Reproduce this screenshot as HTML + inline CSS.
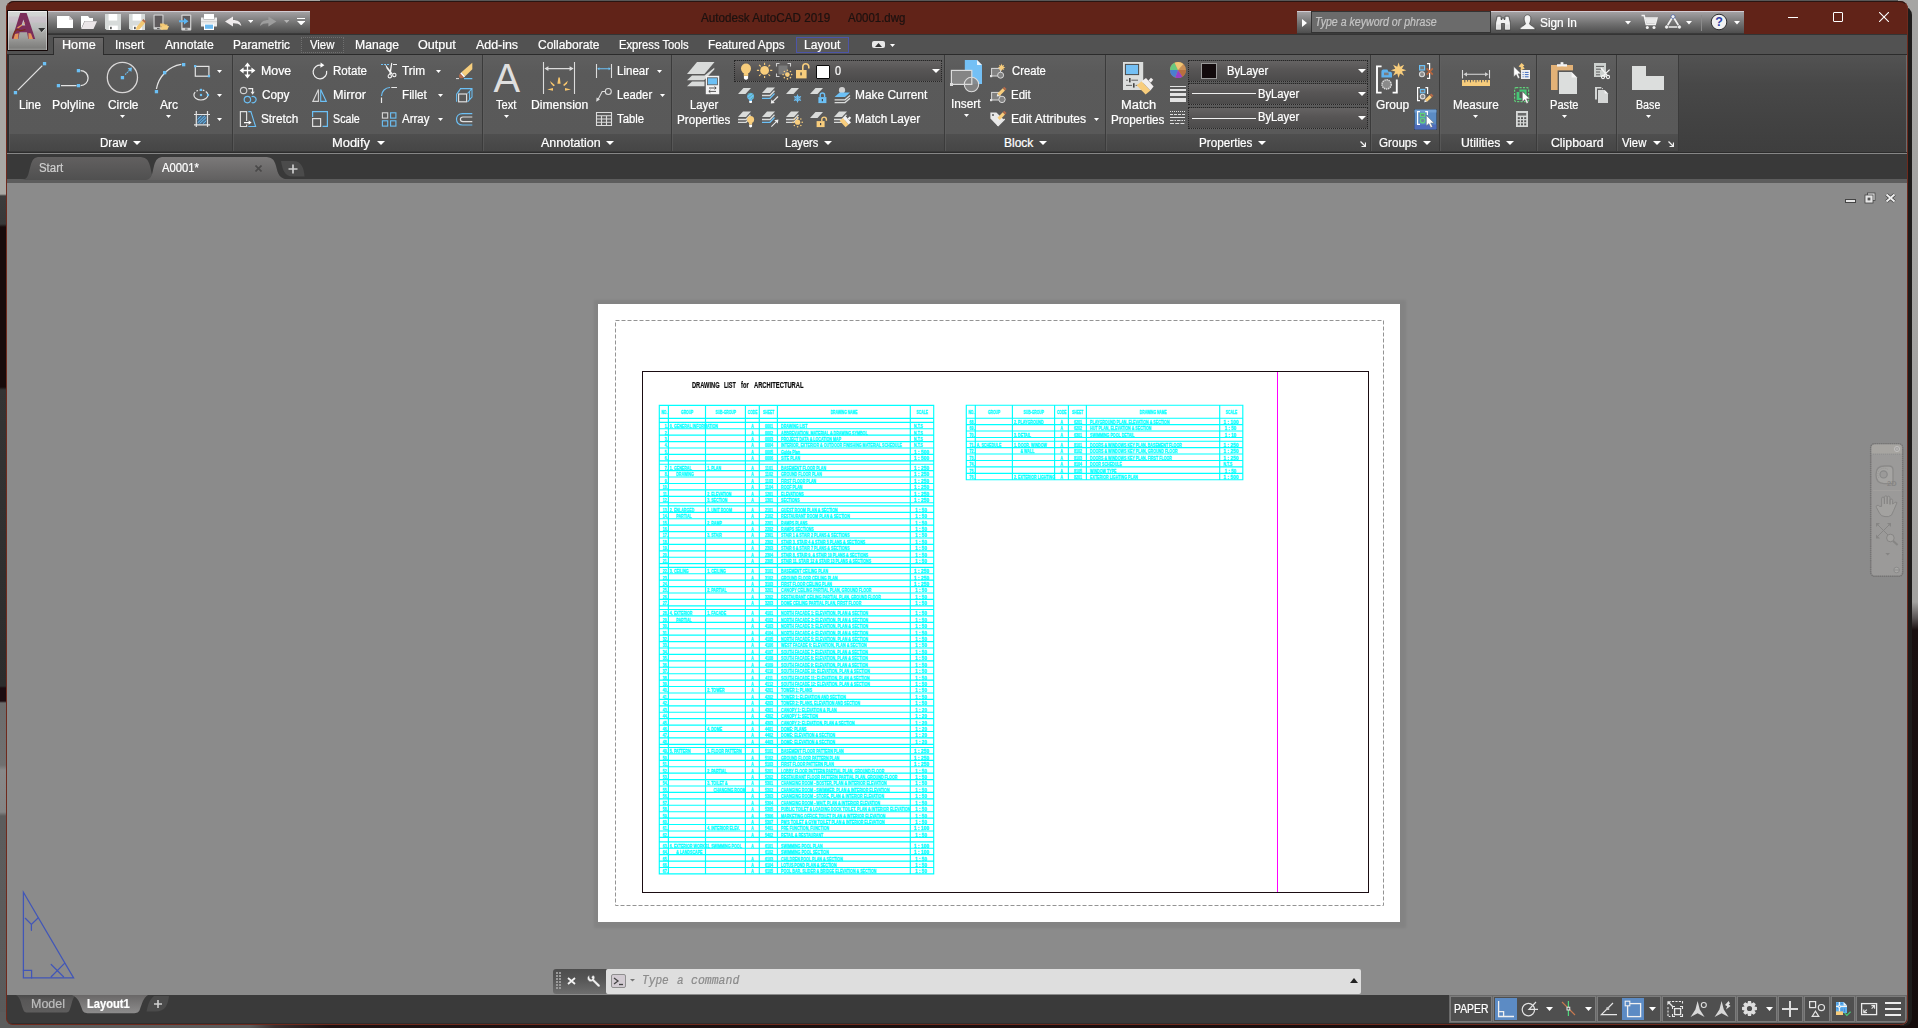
<!DOCTYPE html>
<html><head><meta charset="utf-8"><title>AutoCAD</title><style>
html,body{margin:0;padding:0}
body{width:1918px;height:1028px;overflow:hidden;position:relative;background:#a7a6a2;font-family:"Liberation Sans",sans-serif;font-size:12px}
.r{position:absolute;display:block}
.t{position:absolute;white-space:nowrap;line-height:1;transform-origin:0 0;display:block;-webkit-text-stroke-width:0.22px}
#win{position:absolute;left:0;top:0;width:1918px;height:1028px;clip-path:inset(1px 10px 3px 6px round 8px 8px 7px 7px);background:#8b8b8b}
#winb{position:absolute;left:6px;top:1px;width:1902px;height:1024px;box-sizing:border-box;border:1px solid #6e2a1d;border-top-color:#2a1512;border-radius:8px 8px 7px 7px;pointer-events:none}
</style></head><body>
<div class="r" style="left:0px;top:0px;width:1918px;height:1028px;background:#a7a6a2;"></div>
<div class="r" style="left:320px;top:0px;width:1578px;height:1px;background:#585858;"></div>
<div class="r" style="left:320px;top:1px;width:1584px;height:8px;background:#1e1212;"></div>
<div class="r" style="left:0px;top:0px;width:16px;height:1028px;background:linear-gradient(to bottom,#a9a8a4 0,#a9a8a4 194px,#3c3c3c 196px,#383838 224px,#170b0b 227px,#170b0b 387px,#343434 390px,#2c2c2c 686px,#1c0c10 688px,#1c0c10 701px,#6c6c6c 703px,#707070 765px,#888 770px,#848484 812px,#5c5c5c 816px,#5a5a5a 1028px);"></div>
<div class="r" style="left:0px;top:1012px;width:1918px;height:16px;background:linear-gradient(to right,#5c5c5c 0,#5a5a5a 250px,#3a3030 275px,#1d1212 330px,#160c0c 1918px);"></div>
<div class="r" style="left:1898px;top:0px;width:20px;height:1028px;background:linear-gradient(to bottom,#a6a5a3 0,#a3a2a0 602px,#5a5555 618px,#1a1010 630px,#150c0c 1028px);"></div>
<div class="r" style="left:1900px;top:6px;width:12px;height:1020px;background:#1e1c1b;border-radius:0 9px 8px 0;"></div>
<div id="win">
<div class="r" style="left:0px;top:0px;width:1918px;height:34px;background:#612318;"></div>
<div class="r" style="left:0px;top:34px;width:1918px;height:20px;background:#525252;"></div>
<div class="r" style="left:0px;top:34px;width:1918px;height:1px;background:#343434;"></div>
<div class="r" style="left:48px;top:11px;width:262px;height:23px;background:linear-gradient(to bottom,#d2ccd3 0,#d2ccd3 1px,#a3a1a3 1px,#8d8c8d 6px,#6f6f6f 13px,#595959 19px,#4e4e4e 22px,#3a3a3a 22px,#3a3a3a 23px);"></div>
<div class="r" style="left:1297px;top:11px;width:447px;height:23px;background:linear-gradient(to bottom,#d2ccd3 0,#d2ccd3 1px,#a3a1a3 1px,#8d8c8d 6px,#6f6f6f 13px,#595959 19px,#4e4e4e 22px,#3a3a3a 22px,#3a3a3a 23px);"></div>
<div class="r" style="left:1311px;top:11px;width:180px;height:22px;background:#6b6b6b;border:1px solid #333;box-sizing:border-box;"></div>
<span class="t" style="left:1315px;top:16.24px;font-size:12px;color:#c4c4c4;transform:scaleX(0.882);font-style:italic;">Type a keyword or phrase</span>
<svg class="r" style="left:1302px;top:19px;" width="5" height="8" viewBox="0 0 5 8"><path d="M0 0L5 4L0 8Z" fill="#fff"/></svg>
<span class="t" style="left:1540px;top:17.14px;font-size:12px;color:#fff;transform:scaleX(0.986);">Sign In</span>
<svg class="r" style="left:1624.5px;top:21px;" width="6" height="3.5" viewBox="0 0 6 3.5"><path d="M0 0H6L3.0 3.5Z" fill="#fff"/></svg>
<svg class="r" style="left:1685.5px;top:21px;" width="6" height="3.5" viewBox="0 0 6 3.5"><path d="M0 0H6L3.0 3.5Z" fill="#fff"/></svg>
<svg class="r" style="left:1733.5px;top:21px;" width="6" height="3.5" viewBox="0 0 6 3.5"><path d="M0 0H6L3.0 3.5Z" fill="#fff"/></svg>
<div class="r" style="left:1701px;top:15px;width:1px;height:16px;background:#8a8a8a;"></div>
<span class="t" style="left:701px;top:11.84px;font-size:12px;color:#1c1210;transform:scaleX(0.973);">Autodesk AutoCAD 2019</span>
<span class="t" style="left:848px;top:11.84px;font-size:12px;color:#1c1210;transform:scaleX(0.955);">A0001.dwg</span>
<div class="r" style="left:1788px;top:17px;width:10px;height:1px;background:#fff;"></div>
<div class="r" style="left:1833px;top:12px;width:10px;height:10px;background:transparent;border:1px solid #fff;box-sizing:border-box;border-radius:1px;"></div>
<svg class="r" style="left:1879px;top:12px;" width="10" height="10" viewBox="0 0 10 10"><path d="M0 0L10 10M10 0L0 10" stroke="#fff" stroke-width="1.1" fill="none"/></svg>
<div class="r" style="left:7px;top:10px;width:41px;height:41px;background:#120606;border-radius:1px;"></div>
<div class="r" style="left:8px;top:11px;width:39px;height:39px;background:linear-gradient(to bottom,#f2f0f0 0,#f2f0f0 1px,#d3d6d5 1px,#d0d2d1 5px,#cbc4cb 6px,#c8c0c8 11px,#c0c0c0 12px,#b6b9b8 18px,#a9a9a7 21px,#a0a09e 26px,#8f8f8d 31px,#7f7f7d 37px,#8d8d8b 38px,#8d8d8b 39px);"></div>
<div class="r" style="left:8px;top:11px;width:1px;height:39px;background:rgba(230,230,230,.55);"></div>
<div class="r" style="left:46px;top:11px;width:1px;height:39px;background:rgba(225,225,225,.5);"></div>
<svg class="r" style="left:10px;top:12px;" width="28" height="29" viewBox="0 0 28 29"><path d="M2 27L10.2 1H16.6L25.2 27H18.3L17 20.2H9.6L8.3 27Z M11.4 13.6H15.3L13.4 7.4Z" fill="#7b2d5a" fill-rule="evenodd"/><path d="M3.4 27L5 22L8.6 21.2L8 27ZM18.4 21L21 21.6L23 27H18.6Z" fill="#e2935a"/><path d="M7 15.4L11.6 12.4L12.4 13.6L8 16.4ZM13.6 10.4L14.6 10.2L14.8 12L13.8 12.2Z" fill="#e2935a"/><path d="M2.6 26Q4 19 7 17.6Q9 17.6 10 18.6Q13 18.4 15.4 17.4" stroke="#7a2b12" stroke-width="1.1" fill="none"/></svg>
<svg class="r" style="left:38px;top:28px;" width="8" height="5" viewBox="0 0 8 5"><path d="M0.2 0H7.4L3.8 4.2Z" fill="#333"/><path d="M7.4 0.4L3.8 4.6" stroke="#e8e8e8" stroke-width=".6"/></svg>
<div class="r" style="left:53px;top:37px;width:51px;height:18px;background:linear-gradient(to bottom,#6a6868,#626161 50%,#5f5f5f);border:1px solid #2e2e2e;border-bottom:none;box-sizing:border-box;"></div>
<div class="r" style="left:301px;top:37px;width:43px;height:16px;background:#4f4f4f;border:1px dotted #707070;box-sizing:border-box;"></div>
<div class="r" style="left:796px;top:37px;width:53px;height:16px;background:#595959;border:1px solid #4d55a8;box-sizing:border-box;"></div>
<span class="t" style="left:62px;top:38.54px;font-size:12px;color:#fff;transform:scaleX(1.052);">Home</span>
<span class="t" style="left:115px;top:38.54px;font-size:12px;color:#fff;transform:scaleX(0.978);">Insert</span>
<span class="t" style="left:165px;top:38.54px;font-size:12px;color:#fff;transform:scaleX(1.015);">Annotate</span>
<span class="t" style="left:233px;top:38.54px;font-size:12px;color:#fff;transform:scaleX(0.982);">Parametric</span>
<span class="t" style="left:310px;top:38.54px;font-size:12px;color:#fff;transform:scaleX(0.944);">View</span>
<span class="t" style="left:355px;top:38.54px;font-size:12px;color:#fff;transform:scaleX(1.013);">Manage</span>
<span class="t" style="left:418px;top:38.54px;font-size:12px;color:#fff;transform:scaleX(1.050);">Output</span>
<span class="t" style="left:476px;top:38.54px;font-size:12px;color:#fff;transform:scaleX(1.034);">Add-ins</span>
<span class="t" style="left:538px;top:38.54px;font-size:12px;color:#fff;transform:scaleX(1.001);">Collaborate</span>
<span class="t" style="left:619px;top:38.54px;font-size:12px;color:#fff;transform:scaleX(0.936);">Express Tools</span>
<span class="t" style="left:708px;top:38.54px;font-size:12px;color:#fff;transform:scaleX(0.983);">Featured Apps</span>
<span class="t" style="left:804px;top:38.54px;font-size:12px;color:#fff;transform:scaleX(1.007);">Layout</span>
<div class="r" style="left:872px;top:41px;width:13px;height:7px;background:#e8e8e8;border-radius:2px;"></div>
<svg class="r" style="left:875px;top:42.5px;" width="7" height="4" viewBox="0 0 7 4"><path d="M0 4H7L3.5 0Z" fill="#333"/></svg>
<svg class="r" style="left:890.0px;top:43.5px;" width="5" height="3" viewBox="0 0 5 3"><path d="M0 0H5L2.5 3Z" fill="#fff"/></svg>
<div class="r" style="left:0px;top:54px;width:1918px;height:100px;background:#3a3a3a;"></div>
<div class="r" style="left:7px;top:54px;width:47px;height:1px;background:#2b2b2b;"></div>
<div class="r" style="left:54px;top:54px;width:49px;height:1px;background:#5f5f5f;"></div>
<div class="r" style="left:103px;top:54px;width:1804px;height:1px;background:#2b2b2b;"></div>
<div class="r" style="left:7px;top:55px;width:2px;height:97px;background:#2e2e2e;"></div>
<div class="r" style="left:8px;top:55px;width:1px;height:97px;background:#2b2b2b;"></div>
<div class="r" style="left:1679px;top:55px;width:228px;height:97px;background:#444;"></div>
<div class="r" style="left:1679px;top:55px;width:228px;height:97px;background:linear-gradient(to bottom,#525252 0,#484848 30%,#424242 70%,#3e3e3e 100%);"></div>
<div class="r" style="left:1906px;top:55px;width:1px;height:98px;background:#6c6c6c;"></div>
<div class="r" style="left:9px;top:55px;width:223px;height:79px;background:linear-gradient(to bottom,#5f5f5f 0,#5a5a5a 18px,#595959 100%);"></div>
<div class="r" style="left:9px;top:134px;width:223px;height:17px;background:linear-gradient(to bottom,#4f4f4f,#494949 60%,#464646);"></div>
<div class="r" style="left:9px;top:151px;width:223px;height:1px;background:#3a3a3a;"></div>
<div class="r" style="left:232px;top:55px;width:1px;height:97px;background:#3b3b3b;"></div>
<div class="r" style="left:9px;top:55px;width:1px;height:96px;background:#626262;opacity:.55;"></div>
<div class="r" style="left:233px;top:55px;width:249px;height:79px;background:linear-gradient(to bottom,#5f5f5f 0,#5a5a5a 18px,#595959 100%);"></div>
<div class="r" style="left:233px;top:134px;width:249px;height:17px;background:linear-gradient(to bottom,#4f4f4f,#494949 60%,#464646);"></div>
<div class="r" style="left:233px;top:151px;width:249px;height:1px;background:#3a3a3a;"></div>
<div class="r" style="left:482px;top:55px;width:1px;height:97px;background:#3b3b3b;"></div>
<div class="r" style="left:233px;top:55px;width:1px;height:96px;background:#626262;opacity:.55;"></div>
<div class="r" style="left:483px;top:55px;width:188px;height:79px;background:linear-gradient(to bottom,#5f5f5f 0,#5a5a5a 18px,#595959 100%);"></div>
<div class="r" style="left:483px;top:134px;width:188px;height:17px;background:linear-gradient(to bottom,#4f4f4f,#494949 60%,#464646);"></div>
<div class="r" style="left:483px;top:151px;width:188px;height:1px;background:#3a3a3a;"></div>
<div class="r" style="left:671px;top:55px;width:1px;height:97px;background:#3b3b3b;"></div>
<div class="r" style="left:483px;top:55px;width:1px;height:96px;background:#626262;opacity:.55;"></div>
<div class="r" style="left:672px;top:55px;width:272px;height:79px;background:linear-gradient(to bottom,#5f5f5f 0,#5a5a5a 18px,#595959 100%);"></div>
<div class="r" style="left:672px;top:134px;width:272px;height:17px;background:linear-gradient(to bottom,#4f4f4f,#494949 60%,#464646);"></div>
<div class="r" style="left:672px;top:151px;width:272px;height:1px;background:#3a3a3a;"></div>
<div class="r" style="left:944px;top:55px;width:1px;height:97px;background:#3b3b3b;"></div>
<div class="r" style="left:672px;top:55px;width:1px;height:96px;background:#626262;opacity:.55;"></div>
<div class="r" style="left:945px;top:55px;width:160px;height:79px;background:linear-gradient(to bottom,#5f5f5f 0,#5a5a5a 18px,#595959 100%);"></div>
<div class="r" style="left:945px;top:134px;width:160px;height:17px;background:linear-gradient(to bottom,#4f4f4f,#494949 60%,#464646);"></div>
<div class="r" style="left:945px;top:151px;width:160px;height:1px;background:#3a3a3a;"></div>
<div class="r" style="left:1105px;top:55px;width:1px;height:97px;background:#3b3b3b;"></div>
<div class="r" style="left:945px;top:55px;width:1px;height:96px;background:#626262;opacity:.55;"></div>
<div class="r" style="left:1106px;top:55px;width:264px;height:79px;background:linear-gradient(to bottom,#5f5f5f 0,#5a5a5a 18px,#595959 100%);"></div>
<div class="r" style="left:1106px;top:134px;width:264px;height:17px;background:linear-gradient(to bottom,#4f4f4f,#494949 60%,#464646);"></div>
<div class="r" style="left:1106px;top:151px;width:264px;height:1px;background:#3a3a3a;"></div>
<div class="r" style="left:1370px;top:55px;width:1px;height:97px;background:#3b3b3b;"></div>
<div class="r" style="left:1106px;top:55px;width:1px;height:96px;background:#626262;opacity:.55;"></div>
<div class="r" style="left:1371px;top:55px;width:68px;height:79px;background:linear-gradient(to bottom,#5f5f5f 0,#5a5a5a 18px,#595959 100%);"></div>
<div class="r" style="left:1371px;top:134px;width:68px;height:17px;background:linear-gradient(to bottom,#4f4f4f,#494949 60%,#464646);"></div>
<div class="r" style="left:1371px;top:151px;width:68px;height:1px;background:#3a3a3a;"></div>
<div class="r" style="left:1439px;top:55px;width:1px;height:97px;background:#3b3b3b;"></div>
<div class="r" style="left:1371px;top:55px;width:1px;height:96px;background:#626262;opacity:.55;"></div>
<div class="r" style="left:1440px;top:55px;width:96px;height:79px;background:linear-gradient(to bottom,#5f5f5f 0,#5a5a5a 18px,#595959 100%);"></div>
<div class="r" style="left:1440px;top:134px;width:96px;height:17px;background:linear-gradient(to bottom,#4f4f4f,#494949 60%,#464646);"></div>
<div class="r" style="left:1440px;top:151px;width:96px;height:1px;background:#3a3a3a;"></div>
<div class="r" style="left:1536px;top:55px;width:1px;height:97px;background:#3b3b3b;"></div>
<div class="r" style="left:1440px;top:55px;width:1px;height:96px;background:#626262;opacity:.55;"></div>
<div class="r" style="left:1537px;top:55px;width:79px;height:79px;background:linear-gradient(to bottom,#5f5f5f 0,#5a5a5a 18px,#595959 100%);"></div>
<div class="r" style="left:1537px;top:134px;width:79px;height:17px;background:linear-gradient(to bottom,#4f4f4f,#494949 60%,#464646);"></div>
<div class="r" style="left:1537px;top:151px;width:79px;height:1px;background:#3a3a3a;"></div>
<div class="r" style="left:1616px;top:55px;width:1px;height:97px;background:#3b3b3b;"></div>
<div class="r" style="left:1537px;top:55px;width:1px;height:96px;background:#626262;opacity:.55;"></div>
<div class="r" style="left:1617px;top:55px;width:61px;height:79px;background:linear-gradient(to bottom,#5f5f5f 0,#5a5a5a 18px,#595959 100%);"></div>
<div class="r" style="left:1617px;top:134px;width:61px;height:17px;background:linear-gradient(to bottom,#4f4f4f,#494949 60%,#464646);"></div>
<div class="r" style="left:1617px;top:151px;width:61px;height:1px;background:#3a3a3a;"></div>
<div class="r" style="left:1678px;top:55px;width:1px;height:97px;background:#3b3b3b;"></div>
<div class="r" style="left:1617px;top:55px;width:1px;height:96px;background:#626262;opacity:.55;"></div>
<div class="r" style="left:7px;top:152px;width:1900px;height:1px;background:#2c2c2c;"></div>
<div class="r" style="left:7px;top:153px;width:1900px;height:1px;background:#868686;"></div>
<span class="t" style="left:19px;top:99.34px;font-size:12px;color:#fff;transform:scaleX(0.973);">Line</span>
<span class="t" style="left:52px;top:99.34px;font-size:12px;color:#fff;transform:scaleX(1.017);">Polyline</span>
<span class="t" style="left:108px;top:99.34px;font-size:12px;color:#fff;transform:scaleX(0.992);">Circle</span>
<span class="t" style="left:160px;top:99.34px;font-size:12px;color:#fff;transform:scaleX(1.009);">Arc</span>
<svg class="r" style="left:120.0px;top:114.5px;" width="5" height="3" viewBox="0 0 5 3"><path d="M0 0H5L2.5 3Z" fill="#fff"/></svg>
<svg class="r" style="left:166.0px;top:114.5px;" width="5" height="3" viewBox="0 0 5 3"><path d="M0 0H5L2.5 3Z" fill="#fff"/></svg>
<svg class="r" style="left:217.0px;top:69.5px;" width="5" height="3" viewBox="0 0 5 3"><path d="M0 0H5L2.5 3Z" fill="#fff"/></svg>
<svg class="r" style="left:217.0px;top:93.5px;" width="5" height="3" viewBox="0 0 5 3"><path d="M0 0H5L2.5 3Z" fill="#fff"/></svg>
<svg class="r" style="left:217.0px;top:117.5px;" width="5" height="3" viewBox="0 0 5 3"><path d="M0 0H5L2.5 3Z" fill="#fff"/></svg>
<span class="t" style="left:100px;top:137.14px;font-size:12px;color:#fff;transform:scaleX(0.966);">Draw</span>
<svg class="r" style="left:133.0px;top:141.3px;" width="8" height="4" viewBox="0 0 8 4"><path d="M0 0H8L4.0 4Z" fill="#fff"/></svg>
<span class="t" style="left:261px;top:64.84px;font-size:12px;color:#fff;transform:scaleX(1.030);">Move</span>
<span class="t" style="left:262px;top:88.84px;font-size:12px;color:#fff;transform:scaleX(0.982);">Copy</span>
<span class="t" style="left:261px;top:112.84px;font-size:12px;color:#fff;transform:scaleX(0.981);">Stretch</span>
<span class="t" style="left:333px;top:64.84px;font-size:12px;color:#fff;transform:scaleX(0.962);">Rotate</span>
<span class="t" style="left:333px;top:88.84px;font-size:12px;color:#fff;transform:scaleX(1.056);">Mirror</span>
<span class="t" style="left:333px;top:112.84px;font-size:12px;color:#fff;transform:scaleX(0.892);">Scale</span>
<span class="t" style="left:402px;top:64.84px;font-size:12px;color:#fff;transform:scaleX(0.984);">Trim</span>
<span class="t" style="left:402px;top:88.84px;font-size:12px;color:#fff;transform:scaleX(0.978);">Fillet</span>
<span class="t" style="left:402px;top:112.84px;font-size:12px;color:#fff;transform:scaleX(0.956);">Array</span>
<svg class="r" style="left:436.0px;top:69.5px;" width="5" height="3" viewBox="0 0 5 3"><path d="M0 0H5L2.5 3Z" fill="#fff"/></svg>
<svg class="r" style="left:438.0px;top:93.5px;" width="5" height="3" viewBox="0 0 5 3"><path d="M0 0H5L2.5 3Z" fill="#fff"/></svg>
<svg class="r" style="left:438.0px;top:117.5px;" width="5" height="3" viewBox="0 0 5 3"><path d="M0 0H5L2.5 3Z" fill="#fff"/></svg>
<span class="t" style="left:332px;top:137.14px;font-size:12px;color:#fff;transform:scaleX(1.075);">Modify</span>
<svg class="r" style="left:376.5px;top:141.3px;" width="8" height="4" viewBox="0 0 8 4"><path d="M0 0H8L4.0 4Z" fill="#fff"/></svg>
<span class="t" style="left:496px;top:99.34px;font-size:12px;color:#fff;transform:scaleX(0.927);">Text</span>
<svg class="r" style="left:504.0px;top:114.5px;" width="5" height="3" viewBox="0 0 5 3"><path d="M0 0H5L2.5 3Z" fill="#fff"/></svg>
<span class="t" style="left:531px;top:99.34px;font-size:12px;color:#fff;transform:scaleX(1.012);">Dimension</span>
<span class="t" style="left:617px;top:64.84px;font-size:12px;color:#fff;transform:scaleX(0.963);">Linear</span>
<span class="t" style="left:617px;top:88.84px;font-size:12px;color:#fff;transform:scaleX(0.941);">Leader</span>
<span class="t" style="left:617px;top:112.84px;font-size:12px;color:#fff;transform:scaleX(0.942);">Table</span>
<svg class="r" style="left:657.0px;top:69.5px;" width="5" height="3" viewBox="0 0 5 3"><path d="M0 0H5L2.5 3Z" fill="#fff"/></svg>
<svg class="r" style="left:660.0px;top:93.5px;" width="5" height="3" viewBox="0 0 5 3"><path d="M0 0H5L2.5 3Z" fill="#fff"/></svg>
<span class="t" style="left:541px;top:137.14px;font-size:12px;color:#fff;transform:scaleX(1.040);">Annotation</span>
<svg class="r" style="left:606.0px;top:141.3px;" width="8" height="4" viewBox="0 0 8 4"><path d="M0 0H8L4.0 4Z" fill="#fff"/></svg>
<span class="t" style="left:690px;top:99.34px;font-size:12px;color:#fff;transform:scaleX(0.939);">Layer</span>
<span class="t" style="left:677px;top:113.84px;font-size:12px;color:#fff;transform:scaleX(0.976);">Properties</span>
<div class="r" style="left:734px;top:60px;width:208px;height:22px;background:linear-gradient(to bottom,#656363 0,#575555 45%,#4c4b4b 100%);border:1px dotted #262626;box-sizing:border-box;"></div>
<div class="r" style="left:816px;top:65px;width:14px;height:14px;background:#fff;border:1px solid #0a0a0a;box-sizing:border-box;border-radius:1px;"></div>
<span class="t" style="left:835px;top:64.84px;font-size:12px;color:#fff;transform:scaleX(0.902);">0</span>
<svg class="r" style="left:932.0px;top:69px;" width="8" height="4" viewBox="0 0 8 4"><path d="M0 0H8L4.0 4Z" fill="#fff"/></svg>
<span class="t" style="left:855px;top:88.84px;font-size:12px;color:#fff;transform:scaleX(0.994);">Make Current</span>
<span class="t" style="left:855px;top:112.84px;font-size:12px;color:#fff;transform:scaleX(0.987);">Match Layer</span>
<span class="t" style="left:785px;top:137.14px;font-size:12px;color:#fff;transform:scaleX(0.927);">Layers</span>
<svg class="r" style="left:824.0px;top:141.3px;" width="8" height="4" viewBox="0 0 8 4"><path d="M0 0H8L4.0 4Z" fill="#fff"/></svg>
<span class="t" style="left:951px;top:98.44px;font-size:12px;color:#fff;transform:scaleX(0.985);">Insert</span>
<svg class="r" style="left:964.0px;top:114px;" width="5" height="3" viewBox="0 0 5 3"><path d="M0 0H5L2.5 3Z" fill="#fff"/></svg>
<span class="t" style="left:1012px;top:64.84px;font-size:12px;color:#fff;transform:scaleX(0.939);">Create</span>
<span class="t" style="left:1011px;top:88.84px;font-size:12px;color:#fff;transform:scaleX(0.958);">Edit</span>
<span class="t" style="left:1011px;top:112.84px;font-size:12px;color:#fff;transform:scaleX(1.015);">Edit Attributes</span>
<svg class="r" style="left:1094.0px;top:117.5px;" width="5" height="3" viewBox="0 0 5 3"><path d="M0 0H5L2.5 3Z" fill="#fff"/></svg>
<span class="t" style="left:1004px;top:137.14px;font-size:12px;color:#fff;transform:scaleX(1.000);">Block</span>
<svg class="r" style="left:1039.0px;top:141.3px;" width="8" height="4" viewBox="0 0 8 4"><path d="M0 0H8L4.0 4Z" fill="#fff"/></svg>
<span class="t" style="left:1121px;top:99.34px;font-size:12px;color:#fff;transform:scaleX(1.076);">Match</span>
<span class="t" style="left:1111px;top:113.84px;font-size:12px;color:#fff;transform:scaleX(0.976);">Properties</span>
<div class="r" style="left:1188px;top:60px;width:180px;height:22px;background:linear-gradient(to bottom,#656363 0,#575555 45%,#4c4b4b 100%);border:1px dotted #262626;box-sizing:border-box;"></div>
<div class="r" style="left:1188px;top:83px;width:180px;height:22px;background:linear-gradient(to bottom,#656363 0,#575555 45%,#4c4b4b 100%);border:1px dotted #262626;box-sizing:border-box;"></div>
<div class="r" style="left:1188px;top:107px;width:180px;height:22px;background:linear-gradient(to bottom,#656363 0,#575555 45%,#4c4b4b 100%);border:1px dotted #262626;box-sizing:border-box;"></div>
<div class="r" style="left:1201px;top:63px;width:16px;height:16px;background:#120a0c;border:1px solid #9a9a9a;box-sizing:border-box;"></div>
<span class="t" style="left:1227px;top:64.84px;font-size:12px;color:#fff;transform:scaleX(0.936);">ByLayer</span>
<span class="t" style="left:1258px;top:87.84px;font-size:12px;color:#fff;transform:scaleX(0.936);">ByLayer</span>
<span class="t" style="left:1258px;top:111.44px;font-size:12px;color:#fff;transform:scaleX(0.936);">ByLayer</span>
<div class="r" style="left:1192px;top:93px;width:64px;height:1px;background:#f0f0f0;"></div>
<div class="r" style="left:1192px;top:117.5px;width:64px;height:1px;background:#f0f0f0;"></div>
<svg class="r" style="left:1358.0px;top:69px;" width="8" height="4" viewBox="0 0 8 4"><path d="M0 0H8L4.0 4Z" fill="#fff"/></svg>
<svg class="r" style="left:1358.0px;top:92px;" width="8" height="4" viewBox="0 0 8 4"><path d="M0 0H8L4.0 4Z" fill="#fff"/></svg>
<svg class="r" style="left:1358.0px;top:116px;" width="8" height="4" viewBox="0 0 8 4"><path d="M0 0H8L4.0 4Z" fill="#fff"/></svg>
<span class="t" style="left:1199px;top:137.14px;font-size:12px;color:#fff;transform:scaleX(0.976);">Properties</span>
<svg class="r" style="left:1258.0px;top:141.3px;" width="8" height="4" viewBox="0 0 8 4"><path d="M0 0H8L4.0 4Z" fill="#fff"/></svg>
<svg class="r" style="left:1360px;top:141px;" width="6" height="6" viewBox="0 0 6 6"><path d="M0.5 0.5L5 5M5.5 1.5V5.5H1.5" stroke="#f0f0f0" stroke-width="1.25" fill="none"/></svg>
<span class="t" style="left:1376px;top:99.34px;font-size:12px;color:#fff;transform:scaleX(0.994);">Group</span>
<span class="t" style="left:1379px;top:137.14px;font-size:12px;color:#fff;transform:scaleX(0.969);">Groups</span>
<svg class="r" style="left:1423.0px;top:141.3px;" width="8" height="4" viewBox="0 0 8 4"><path d="M0 0H8L4.0 4Z" fill="#fff"/></svg>
<div class="r" style="left:1414px;top:109px;width:23px;height:21px;background:#5b84c0;border:1px solid #2a2a2a;box-sizing:border-box;"></div>
<span class="t" style="left:1453px;top:99.34px;font-size:12px;color:#fff;transform:scaleX(0.979);">Measure</span>
<svg class="r" style="left:1473.0px;top:114.5px;" width="5" height="3" viewBox="0 0 5 3"><path d="M0 0H5L2.5 3Z" fill="#fff"/></svg>
<span class="t" style="left:1461px;top:137.14px;font-size:12px;color:#fff;transform:scaleX(1.018);">Utilities</span>
<svg class="r" style="left:1506.0px;top:141.3px;" width="8" height="4" viewBox="0 0 8 4"><path d="M0 0H8L4.0 4Z" fill="#fff"/></svg>
<span class="t" style="left:1550px;top:99.34px;font-size:12px;color:#fff;transform:scaleX(0.925);">Paste</span>
<svg class="r" style="left:1562.0px;top:114.5px;" width="5" height="3" viewBox="0 0 5 3"><path d="M0 0H5L2.5 3Z" fill="#fff"/></svg>
<span class="t" style="left:1551px;top:137.14px;font-size:12px;color:#fff;transform:scaleX(1.024);">Clipboard</span>
<span class="t" style="left:1636px;top:99.34px;font-size:12px;color:#fff;transform:scaleX(0.890);">Base</span>
<svg class="r" style="left:1646.0px;top:114.5px;" width="5" height="3" viewBox="0 0 5 3"><path d="M0 0H5L2.5 3Z" fill="#fff"/></svg>
<span class="t" style="left:1622px;top:137.14px;font-size:12px;color:#fff;transform:scaleX(0.944);">View</span>
<svg class="r" style="left:1653.0px;top:141.3px;" width="8" height="4" viewBox="0 0 8 4"><path d="M0 0H8L4.0 4Z" fill="#fff"/></svg>
<svg class="r" style="left:1668px;top:141px;" width="6" height="6" viewBox="0 0 6 6"><path d="M0.5 0.5L5 5M5.5 1.5V5.5H1.5" stroke="#f0f0f0" stroke-width="1.25" fill="none"/></svg>
<div class="r" style="left:0px;top:154px;width:1918px;height:25px;background:#393939;"></div>
<div class="r" style="left:0px;top:179px;width:1918px;height:4px;background:#5d5d5d;"></div>
<svg class="r" style="left:20px;top:157px;" width="136" height="23" viewBox="0 0 136 23"><defs><linearGradient id="gS" x1="0" y1="0" x2="0" y2="1"><stop offset="0" stop-color="#626060"/><stop offset="1" stop-color="#505050"/></linearGradient></defs><path d="M0 23C9 23 8 17 10.5 9C12.5 2 14 0 20 0H118C126 0 128 2 130 9C132 17 132 22 136 23Z" fill="url(#gS)"/></svg>
<svg class="r" style="left:146px;top:157px;" width="144" height="23" viewBox="0 0 144 23"><defs><linearGradient id="gA" x1="0" y1="0" x2="0" y2="1"><stop offset="0" stop-color="#7b7979"/><stop offset="1" stop-color="#616060"/></linearGradient></defs><path d="M0 23C6 22 6 17 8 9C10 2 12 0 18 0H118C126 0 128 2 130 9C132 17 133 22 144 23Z" fill="url(#gA)"/></svg>
<svg class="r" style="left:281px;top:161px;" width="24" height="16" viewBox="0 0 24 16"><path d="M0 0H12C21 0 23 8 23.5 15.5H12C3 15.5 1.5 8 0 0Z" fill="#4b4b4b"/><path d="M7.5 8H16.5M12 3.5V12.5" stroke="#cdcdcd" stroke-width="1.7" fill="none"/></svg>
<span class="t" style="left:39px;top:162.44px;font-size:12px;color:#cfcfcf;transform:scaleX(0.952);">Start</span>
<span class="t" style="left:162px;top:162.44px;font-size:12px;color:#fff;transform:scaleX(0.936);">A0001*</span>
<svg class="r" style="left:255px;top:164.5px;" width="7" height="7" viewBox="0 0 7 7"><path d="M0.5 0.5L6.5 6.5M6.5 0.5L0.5 6.5" stroke="#4a4949" stroke-width="1.6" fill="none"/></svg>
<div class="r" style="left:0px;top:183px;width:1918px;height:812px;background:#8b8b8b;"></div>
<div class="r" style="left:1845px;top:199px;width:11px;height:4px;background:#e6e6e6;border:1px solid #444;box-sizing:border-box;"></div>
<svg class="r" style="left:1864px;top:192px;" width="12" height="12" viewBox="0 0 12 12"><rect x="3.5" y="1" width="7.5" height="7.5" fill="#e0e0e0" stroke="#444" stroke-width=".8"/><rect x="1" y="3" width="8" height="8" fill="#e6e6e6" stroke="#444" stroke-width=".8"/><rect x="3.6" y="5.6" width="2.8" height="2.8" fill="#555"/></svg>
<svg class="r" style="left:1885px;top:193px;" width="11" height="10" viewBox="0 0 11 10"><path d="M1.5 1.5L9.5 8.5M9.5 1.5L1.5 8.5" stroke="#444" stroke-width="3.6" fill="none"/><path d="M1.5 1.5L9.5 8.5M9.5 1.5L1.5 8.5" stroke="#eee" stroke-width="2" fill="none"/></svg>
<div class="r" style="left:594px;top:300px;width:812px;height:628px;background:#838383;filter:blur(1.2px);opacity:.9;"></div>
<div class="r" style="left:598px;top:304px;width:802px;height:618px;background:#fff;"></div>
<svg class="r" style="left:610px;top:315px;" width="780" height="596" viewBox="0 0 780 596"><rect x="5.5" y="5.5" width="768" height="585" fill="none" stroke="#949494" stroke-width="1" stroke-dasharray="4 2"/></svg>
<div class="r" style="left:642px;top:371px;width:727px;height:522px;background:transparent;border:1px solid #1a0c12;box-sizing:border-box;"></div>
<div class="r" style="left:1277px;top:372px;width:1px;height:520px;background:#ff00ff;"></div>
<span class="t" style="left:692px;top:381.11px;font-size:9.2px;color:#0c0c0c;transform:scaleX(0.621);font-weight:700;">DRAWING</span>
<span class="t" style="left:724px;top:381.11px;font-size:9.2px;color:#0c0c0c;transform:scaleX(0.596);font-weight:700;">LIST</span>
<span class="t" style="left:741px;top:381.11px;font-size:9.2px;color:#0c0c0c;transform:scaleX(0.620);font-weight:700;">for</span>
<span class="t" style="left:754px;top:381.11px;font-size:9.2px;color:#0c0c0c;transform:scaleX(0.630);font-weight:700;">ARCHITECTURAL</span>
<svg class="r" style="left:650px;top:400px;" width="300" height="480" viewBox="0 0 300 480"><path d="M8.80 5.30H284.20M8.80 18.40H284.20M8.80 22.30H284.20M8.80 28.72H284.20M8.80 35.14H284.20M8.80 41.56H284.20M8.80 47.98H284.20M8.80 54.40H284.20M8.80 60.82H284.20M8.80 64.20H284.20M8.80 70.62H284.20M8.80 77.04H284.20M8.80 83.46H284.20M8.80 89.88H284.20M8.80 96.30H284.20M8.80 102.72H284.20M8.80 105.90H284.20M8.80 112.32H284.20M8.80 118.74H284.20M8.80 125.16H284.20M8.80 131.58H284.20M8.80 138.00H284.20M8.80 144.42H284.20M8.80 150.84H284.20M8.80 157.26H284.20M8.80 163.68H284.20M8.80 167.30H284.20M8.80 173.72H284.20M8.80 180.14H284.20M8.80 186.56H284.20M8.80 192.98H284.20M8.80 199.40H284.20M8.80 205.82H284.20M8.80 209.50H284.20M8.80 215.92H284.20M8.80 222.34H284.20M8.80 228.76H284.20M8.80 235.18H284.20M8.80 241.60H284.20M8.80 248.02H284.20M8.80 254.44H284.20M8.80 260.86H284.20M8.80 267.28H284.20M8.80 273.70H284.20M8.80 280.12H284.20M8.80 286.54H284.20M8.80 292.96H284.20M8.80 299.38H284.20M8.80 305.80H284.20M8.80 312.22H284.20M8.80 318.64H284.20M8.80 325.06H284.20M8.80 331.48H284.20M8.80 337.90H284.20M8.80 344.32H284.20M8.80 347.50H284.20M8.80 353.92H284.20M8.80 360.34H284.20M8.80 366.76H284.20M8.80 373.18H284.20M8.80 379.60H284.20M8.80 386.02H284.20M8.80 392.44H284.20M8.80 398.86H284.20M8.80 405.28H284.20M8.80 411.70H284.20M8.80 418.12H284.20M8.80 424.54H284.20M8.80 430.96H284.20M8.80 437.38H284.20M8.80 441.80H284.20M8.80 448.22H284.20M8.80 454.64H284.20M8.80 461.06H284.20M8.80 467.48H284.20M8.80 473.90H284.20M9.30 4.80V474.40M18.40 4.80V474.40M55.50 4.80V474.40M95.40 4.80V474.40M109.30 4.80V474.40M127.40 4.80V474.40M260.30 4.80V474.40M283.70 4.80V474.40" stroke="#00ffff" stroke-width="1.15" fill="none"/><g transform="translate(-650,-400)" fill="#00ffff" font-family="Liberation Sans,sans-serif" font-weight="700" font-size="5px" stroke="#00ffff" stroke-width="0.28"><text x="661.18" y="413.75" textLength="5.94" lengthAdjust="spacingAndGlyphs">NO.</text><text x="680.82" y="413.75" textLength="12.26" lengthAdjust="spacingAndGlyphs">GROUP</text><text x="715.23" y="413.75" textLength="20.43" lengthAdjust="spacingAndGlyphs">SUB-GROUP</text><text x="747.52" y="413.75" textLength="9.66" lengthAdjust="spacingAndGlyphs">CODE</text><text x="762.78" y="413.75" textLength="11.15" lengthAdjust="spacingAndGlyphs">SHEET</text><text x="830.38" y="413.75" textLength="26.93" lengthAdjust="spacingAndGlyphs">DRAWING NAME</text><text x="916.33" y="413.75" textLength="11.33" lengthAdjust="spacingAndGlyphs">SCALE</text><text x="664.47" y="428.17" textLength="3.03" lengthAdjust="spacingAndGlyphs">1.</text><text x="669.60" y="428.17" textLength="48.12" lengthAdjust="spacingAndGlyphs">0. GENERAL INFORMATION</text><text x="751.04" y="428.17" textLength="2.62" lengthAdjust="spacingAndGlyphs">A</text><text x="764.71" y="428.17" textLength="8.08" lengthAdjust="spacingAndGlyphs">0001</text><text x="780.80" y="428.17" textLength="26.45" lengthAdjust="spacingAndGlyphs">DRAWING LIST</text><text x="913.80" y="428.17" textLength="8.88" lengthAdjust="spacingAndGlyphs">N.T.S</text><text x="664.47" y="434.59" textLength="3.03" lengthAdjust="spacingAndGlyphs">2.</text><text x="751.04" y="434.59" textLength="2.62" lengthAdjust="spacingAndGlyphs">A</text><text x="764.71" y="434.59" textLength="8.08" lengthAdjust="spacingAndGlyphs">0002</text><text x="780.80" y="434.59" textLength="86.61" lengthAdjust="spacingAndGlyphs">ABBREVIATION, MATERIAL &amp; DRAWING SYMBOL</text><text x="913.80" y="434.59" textLength="8.88" lengthAdjust="spacingAndGlyphs">N.T.S</text><text x="664.47" y="441.01" textLength="3.03" lengthAdjust="spacingAndGlyphs">3.</text><text x="751.04" y="441.01" textLength="2.62" lengthAdjust="spacingAndGlyphs">A</text><text x="764.71" y="441.01" textLength="8.08" lengthAdjust="spacingAndGlyphs">0003</text><text x="780.80" y="441.01" textLength="60.03" lengthAdjust="spacingAndGlyphs">PROJECT DATA &amp; LOCATION MAP</text><text x="913.80" y="441.01" textLength="8.88" lengthAdjust="spacingAndGlyphs">N.T.S</text><text x="664.47" y="447.43" textLength="3.03" lengthAdjust="spacingAndGlyphs">4.</text><text x="751.04" y="447.43" textLength="2.62" lengthAdjust="spacingAndGlyphs">A</text><text x="764.71" y="447.43" textLength="8.08" lengthAdjust="spacingAndGlyphs">0004</text><text x="780.80" y="447.43" textLength="121.00" lengthAdjust="spacingAndGlyphs">INTERIOR, EXTERIOR &amp; OUTDOOR FINISHING MATERIAL SCHEDULE</text><text x="913.80" y="447.43" textLength="8.88" lengthAdjust="spacingAndGlyphs">N.T.S</text><text x="664.47" y="453.85" textLength="3.03" lengthAdjust="spacingAndGlyphs">5.</text><text x="751.04" y="453.85" textLength="2.62" lengthAdjust="spacingAndGlyphs">A</text><text x="764.71" y="453.85" textLength="8.08" lengthAdjust="spacingAndGlyphs">0005</text><text x="780.80" y="453.85" textLength="18.98" lengthAdjust="spacingAndGlyphs">Guide Plan</text><text x="913.80" y="453.85" textLength="15.20" lengthAdjust="spacingAndGlyphs">1 : 500</text><text x="664.47" y="460.27" textLength="3.03" lengthAdjust="spacingAndGlyphs">6.</text><text x="751.04" y="460.27" textLength="2.62" lengthAdjust="spacingAndGlyphs">A</text><text x="764.71" y="460.27" textLength="8.08" lengthAdjust="spacingAndGlyphs">0006</text><text x="780.80" y="460.27" textLength="18.98" lengthAdjust="spacingAndGlyphs">SITE PLAN</text><text x="913.80" y="460.27" textLength="15.20" lengthAdjust="spacingAndGlyphs">1 : 500</text><text x="664.47" y="470.07" textLength="3.03" lengthAdjust="spacingAndGlyphs">7.</text><text x="669.60" y="470.07" textLength="21.81" lengthAdjust="spacingAndGlyphs">1. GENERAL</text><text x="706.90" y="470.07" textLength="13.93" lengthAdjust="spacingAndGlyphs">1. PLAN</text><text x="751.04" y="470.07" textLength="2.62" lengthAdjust="spacingAndGlyphs">A</text><text x="764.81" y="470.07" textLength="7.88" lengthAdjust="spacingAndGlyphs">1101</text><text x="780.80" y="470.07" textLength="45.02" lengthAdjust="spacingAndGlyphs">BASEMENT FLOOR PLAN</text><text x="913.80" y="470.07" textLength="15.20" lengthAdjust="spacingAndGlyphs">1 : 250</text><text x="664.47" y="476.49" textLength="3.03" lengthAdjust="spacingAndGlyphs">8.</text><text x="676.00" y="476.49" textLength="17.56" lengthAdjust="spacingAndGlyphs">DRAWING</text><text x="751.04" y="476.49" textLength="2.62" lengthAdjust="spacingAndGlyphs">A</text><text x="764.81" y="476.49" textLength="7.88" lengthAdjust="spacingAndGlyphs">1102</text><text x="780.80" y="476.49" textLength="40.78" lengthAdjust="spacingAndGlyphs">GROUND FLOOR PLAN</text><text x="913.80" y="476.49" textLength="15.20" lengthAdjust="spacingAndGlyphs">1 : 250</text><text x="664.47" y="482.91" textLength="3.03" lengthAdjust="spacingAndGlyphs">9.</text><text x="751.04" y="482.91" textLength="2.62" lengthAdjust="spacingAndGlyphs">A</text><text x="764.81" y="482.91" textLength="7.88" lengthAdjust="spacingAndGlyphs">1103</text><text x="780.80" y="482.91" textLength="35.12" lengthAdjust="spacingAndGlyphs">FIRST FLOOR PLAN</text><text x="913.80" y="482.91" textLength="15.20" lengthAdjust="spacingAndGlyphs">1 : 250</text><text x="662.45" y="489.33" textLength="5.05" lengthAdjust="spacingAndGlyphs">10.</text><text x="751.04" y="489.33" textLength="2.62" lengthAdjust="spacingAndGlyphs">A</text><text x="764.81" y="489.33" textLength="7.88" lengthAdjust="spacingAndGlyphs">1104</text><text x="780.80" y="489.33" textLength="21.40" lengthAdjust="spacingAndGlyphs">ROOF PLAN</text><text x="913.80" y="489.33" textLength="15.20" lengthAdjust="spacingAndGlyphs">1 : 250</text><text x="662.65" y="495.75" textLength="4.85" lengthAdjust="spacingAndGlyphs">11.</text><text x="706.90" y="495.75" textLength="24.30" lengthAdjust="spacingAndGlyphs">2. ELEVATION</text><text x="751.04" y="495.75" textLength="2.62" lengthAdjust="spacingAndGlyphs">A</text><text x="764.71" y="495.75" textLength="8.08" lengthAdjust="spacingAndGlyphs">1201</text><text x="780.80" y="495.75" textLength="22.68" lengthAdjust="spacingAndGlyphs">ELEVATIONS</text><text x="913.80" y="495.75" textLength="15.20" lengthAdjust="spacingAndGlyphs">1 : 250</text><text x="662.45" y="502.17" textLength="5.05" lengthAdjust="spacingAndGlyphs">12.</text><text x="706.90" y="502.17" textLength="20.19" lengthAdjust="spacingAndGlyphs">3. SECTION</text><text x="751.04" y="502.17" textLength="2.62" lengthAdjust="spacingAndGlyphs">A</text><text x="764.71" y="502.17" textLength="8.08" lengthAdjust="spacingAndGlyphs">1301</text><text x="780.80" y="502.17" textLength="18.58" lengthAdjust="spacingAndGlyphs">SECTIONS</text><text x="913.80" y="502.17" textLength="15.20" lengthAdjust="spacingAndGlyphs">1 : 250</text><text x="662.45" y="511.77" textLength="5.05" lengthAdjust="spacingAndGlyphs">13.</text><text x="669.60" y="511.77" textLength="24.43" lengthAdjust="spacingAndGlyphs">2. ENLARGED</text><text x="706.90" y="511.77" textLength="24.83" lengthAdjust="spacingAndGlyphs">1. UNIT ROOM</text><text x="751.04" y="511.77" textLength="2.62" lengthAdjust="spacingAndGlyphs">A</text><text x="764.71" y="511.77" textLength="8.08" lengthAdjust="spacingAndGlyphs">2101</text><text x="780.80" y="511.77" textLength="56.53" lengthAdjust="spacingAndGlyphs">GUEST ROOM PLAN &amp; SECTION</text><text x="915.00" y="511.77" textLength="11.70" lengthAdjust="spacingAndGlyphs">1 : 50</text><text x="662.45" y="518.19" textLength="5.05" lengthAdjust="spacingAndGlyphs">14.</text><text x="676.00" y="518.19" textLength="15.48" lengthAdjust="spacingAndGlyphs">PARTIAL</text><text x="751.04" y="518.19" textLength="2.62" lengthAdjust="spacingAndGlyphs">A</text><text x="764.71" y="518.19" textLength="8.08" lengthAdjust="spacingAndGlyphs">2102</text><text x="780.80" y="518.19" textLength="68.78" lengthAdjust="spacingAndGlyphs">RESTAURANT ROOM PLAN &amp; SECTION</text><text x="915.00" y="518.19" textLength="11.70" lengthAdjust="spacingAndGlyphs">1 : 50</text><text x="662.45" y="524.61" textLength="5.05" lengthAdjust="spacingAndGlyphs">15.</text><text x="706.90" y="524.61" textLength="14.74" lengthAdjust="spacingAndGlyphs">2. RAMP</text><text x="751.04" y="524.61" textLength="2.62" lengthAdjust="spacingAndGlyphs">A</text><text x="764.71" y="524.61" textLength="8.08" lengthAdjust="spacingAndGlyphs">2201</text><text x="780.80" y="524.61" textLength="26.45" lengthAdjust="spacingAndGlyphs">RAMPS PLANS</text><text x="915.00" y="524.61" textLength="11.70" lengthAdjust="spacingAndGlyphs">1 : 50</text><text x="662.45" y="531.03" textLength="5.05" lengthAdjust="spacingAndGlyphs">16.</text><text x="751.04" y="531.03" textLength="2.62" lengthAdjust="spacingAndGlyphs">A</text><text x="764.71" y="531.03" textLength="8.08" lengthAdjust="spacingAndGlyphs">2202</text><text x="780.80" y="531.03" textLength="32.71" lengthAdjust="spacingAndGlyphs">RAMPS SECTIONS</text><text x="915.00" y="531.03" textLength="11.70" lengthAdjust="spacingAndGlyphs">1 : 50</text><text x="662.45" y="537.45" textLength="5.05" lengthAdjust="spacingAndGlyphs">17.</text><text x="706.90" y="537.45" textLength="14.67" lengthAdjust="spacingAndGlyphs">3. STAIR</text><text x="751.04" y="537.45" textLength="2.62" lengthAdjust="spacingAndGlyphs">A</text><text x="764.71" y="537.45" textLength="8.08" lengthAdjust="spacingAndGlyphs">2301</text><text x="780.80" y="537.45" textLength="68.51" lengthAdjust="spacingAndGlyphs">STAIR 1 &amp; STAIR 2 PLANS &amp; SECTIONS</text><text x="915.00" y="537.45" textLength="11.70" lengthAdjust="spacingAndGlyphs">1 : 50</text><text x="662.45" y="543.87" textLength="5.05" lengthAdjust="spacingAndGlyphs">18.</text><text x="751.04" y="543.87" textLength="2.62" lengthAdjust="spacingAndGlyphs">A</text><text x="764.71" y="543.87" textLength="8.08" lengthAdjust="spacingAndGlyphs">2302</text><text x="780.80" y="543.87" textLength="84.20" lengthAdjust="spacingAndGlyphs">STAIR 3, STAIR 4 &amp; STAIR 5 PLANS &amp; SECTIONS</text><text x="915.00" y="543.87" textLength="11.70" lengthAdjust="spacingAndGlyphs">1 : 50</text><text x="662.45" y="550.29" textLength="5.05" lengthAdjust="spacingAndGlyphs">19.</text><text x="751.04" y="550.29" textLength="2.62" lengthAdjust="spacingAndGlyphs">A</text><text x="764.71" y="550.29" textLength="8.08" lengthAdjust="spacingAndGlyphs">2303</text><text x="780.80" y="550.29" textLength="68.51" lengthAdjust="spacingAndGlyphs">STAIR 6 &amp; STAIR 7 PLANS &amp; SECTIONS</text><text x="915.00" y="550.29" textLength="11.70" lengthAdjust="spacingAndGlyphs">1 : 50</text><text x="662.45" y="556.71" textLength="5.05" lengthAdjust="spacingAndGlyphs">20.</text><text x="751.04" y="556.71" textLength="2.62" lengthAdjust="spacingAndGlyphs">A</text><text x="764.71" y="556.71" textLength="8.08" lengthAdjust="spacingAndGlyphs">2304</text><text x="780.80" y="556.71" textLength="87.23" lengthAdjust="spacingAndGlyphs">STAIR 8, STAIR 9, &amp; STAIR 10 PLANS &amp; SECTIONS</text><text x="915.00" y="556.71" textLength="11.70" lengthAdjust="spacingAndGlyphs">1 : 50</text><text x="662.45" y="563.13" textLength="5.05" lengthAdjust="spacingAndGlyphs">21.</text><text x="751.04" y="563.13" textLength="2.62" lengthAdjust="spacingAndGlyphs">A</text><text x="764.71" y="563.13" textLength="8.08" lengthAdjust="spacingAndGlyphs">2305</text><text x="780.80" y="563.13" textLength="90.06" lengthAdjust="spacingAndGlyphs">STAIR 11, STAIR 12 &amp; STAIR 13 PLANS &amp; SECTIONS</text><text x="915.00" y="563.13" textLength="11.70" lengthAdjust="spacingAndGlyphs">1 : 50</text><text x="662.45" y="573.17" textLength="5.05" lengthAdjust="spacingAndGlyphs">22.</text><text x="669.60" y="573.17" textLength="18.78" lengthAdjust="spacingAndGlyphs">3. CEILING</text><text x="706.90" y="573.17" textLength="18.78" lengthAdjust="spacingAndGlyphs">1. CEILING</text><text x="751.04" y="573.17" textLength="2.62" lengthAdjust="spacingAndGlyphs">A</text><text x="764.71" y="573.17" textLength="8.08" lengthAdjust="spacingAndGlyphs">3101</text><text x="780.80" y="573.17" textLength="47.04" lengthAdjust="spacingAndGlyphs">BASEMENT CEILING PLAN</text><text x="913.80" y="573.17" textLength="15.20" lengthAdjust="spacingAndGlyphs">1 : 250</text><text x="662.45" y="579.59" textLength="5.05" lengthAdjust="spacingAndGlyphs">23.</text><text x="751.04" y="579.59" textLength="2.62" lengthAdjust="spacingAndGlyphs">A</text><text x="764.71" y="579.59" textLength="8.08" lengthAdjust="spacingAndGlyphs">3102</text><text x="780.80" y="579.59" textLength="56.53" lengthAdjust="spacingAndGlyphs">GROUND FLOOR CEILING PLAN</text><text x="913.80" y="579.59" textLength="15.20" lengthAdjust="spacingAndGlyphs">1 : 250</text><text x="662.45" y="586.01" textLength="5.05" lengthAdjust="spacingAndGlyphs">24.</text><text x="751.04" y="586.01" textLength="2.62" lengthAdjust="spacingAndGlyphs">A</text><text x="764.71" y="586.01" textLength="8.08" lengthAdjust="spacingAndGlyphs">3103</text><text x="780.80" y="586.01" textLength="50.87" lengthAdjust="spacingAndGlyphs">FIRST FLOOR CEILING PLAN</text><text x="913.80" y="586.01" textLength="15.20" lengthAdjust="spacingAndGlyphs">1 : 250</text><text x="662.45" y="592.43" textLength="5.05" lengthAdjust="spacingAndGlyphs">25.</text><text x="706.90" y="592.43" textLength="19.52" lengthAdjust="spacingAndGlyphs">2. PARTIAL</text><text x="751.04" y="592.43" textLength="2.62" lengthAdjust="spacingAndGlyphs">A</text><text x="764.71" y="592.43" textLength="8.08" lengthAdjust="spacingAndGlyphs">3201</text><text x="780.80" y="592.43" textLength="90.45" lengthAdjust="spacingAndGlyphs">CANOPY CEILING PARTIAL PLAN, GROUND FLOOR</text><text x="915.00" y="592.43" textLength="11.70" lengthAdjust="spacingAndGlyphs">1 : 50</text><text x="662.45" y="598.85" textLength="5.05" lengthAdjust="spacingAndGlyphs">26.</text><text x="751.04" y="598.85" textLength="2.62" lengthAdjust="spacingAndGlyphs">A</text><text x="764.71" y="598.85" textLength="8.08" lengthAdjust="spacingAndGlyphs">3202</text><text x="780.80" y="598.85" textLength="99.73" lengthAdjust="spacingAndGlyphs">RESTAURANT CEILING PARTIAL PLAN, GROUND FLOOR</text><text x="915.00" y="598.85" textLength="11.70" lengthAdjust="spacingAndGlyphs">1 : 50</text><text x="662.45" y="605.27" textLength="5.05" lengthAdjust="spacingAndGlyphs">27.</text><text x="751.04" y="605.27" textLength="2.62" lengthAdjust="spacingAndGlyphs">A</text><text x="764.71" y="605.27" textLength="8.08" lengthAdjust="spacingAndGlyphs">3203</text><text x="780.80" y="605.27" textLength="80.21" lengthAdjust="spacingAndGlyphs">DOME CEILING PARTIAL PLAN, FIRST FLOOR</text><text x="915.00" y="605.27" textLength="11.70" lengthAdjust="spacingAndGlyphs">1 : 50</text><text x="662.45" y="615.37" textLength="5.05" lengthAdjust="spacingAndGlyphs">28.</text><text x="669.60" y="615.37" textLength="22.62" lengthAdjust="spacingAndGlyphs">4. EXTERIOR</text><text x="706.90" y="615.37" textLength="18.98" lengthAdjust="spacingAndGlyphs">1. FACADE</text><text x="751.04" y="615.37" textLength="2.62" lengthAdjust="spacingAndGlyphs">A</text><text x="764.71" y="615.37" textLength="8.08" lengthAdjust="spacingAndGlyphs">4101</text><text x="780.80" y="615.37" textLength="87.08" lengthAdjust="spacingAndGlyphs">NORTH FACADE 1: ELEVATION, PLAN &amp; SECTION</text><text x="915.00" y="615.37" textLength="11.70" lengthAdjust="spacingAndGlyphs">1 : 50</text><text x="662.45" y="621.79" textLength="5.05" lengthAdjust="spacingAndGlyphs">29.</text><text x="676.00" y="621.79" textLength="15.48" lengthAdjust="spacingAndGlyphs">PARTIAL</text><text x="751.04" y="621.79" textLength="2.62" lengthAdjust="spacingAndGlyphs">A</text><text x="764.71" y="621.79" textLength="8.08" lengthAdjust="spacingAndGlyphs">4102</text><text x="780.80" y="621.79" textLength="87.08" lengthAdjust="spacingAndGlyphs">NORTH FACADE 2: ELEVATION, PLAN &amp; SECTION</text><text x="915.00" y="621.79" textLength="11.70" lengthAdjust="spacingAndGlyphs">1 : 50</text><text x="662.45" y="628.21" textLength="5.05" lengthAdjust="spacingAndGlyphs">30.</text><text x="751.04" y="628.21" textLength="2.62" lengthAdjust="spacingAndGlyphs">A</text><text x="764.71" y="628.21" textLength="8.08" lengthAdjust="spacingAndGlyphs">4103</text><text x="780.80" y="628.21" textLength="87.08" lengthAdjust="spacingAndGlyphs">NORTH FACADE 3: ELEVATION, PLAN &amp; SECTION</text><text x="915.00" y="628.21" textLength="11.70" lengthAdjust="spacingAndGlyphs">1 : 50</text><text x="662.45" y="634.63" textLength="5.05" lengthAdjust="spacingAndGlyphs">31.</text><text x="751.04" y="634.63" textLength="2.62" lengthAdjust="spacingAndGlyphs">A</text><text x="764.71" y="634.63" textLength="8.08" lengthAdjust="spacingAndGlyphs">4104</text><text x="780.80" y="634.63" textLength="87.08" lengthAdjust="spacingAndGlyphs">NORTH FACADE 4: ELEVATION, PLAN &amp; SECTION</text><text x="915.00" y="634.63" textLength="11.70" lengthAdjust="spacingAndGlyphs">1 : 50</text><text x="662.45" y="641.05" textLength="5.05" lengthAdjust="spacingAndGlyphs">32.</text><text x="751.04" y="641.05" textLength="2.62" lengthAdjust="spacingAndGlyphs">A</text><text x="764.71" y="641.05" textLength="8.08" lengthAdjust="spacingAndGlyphs">4105</text><text x="780.80" y="641.05" textLength="87.08" lengthAdjust="spacingAndGlyphs">NORTH FACADE 5: ELEVATION, PLAN &amp; SECTION</text><text x="915.00" y="641.05" textLength="11.70" lengthAdjust="spacingAndGlyphs">1 : 50</text><text x="662.45" y="647.47" textLength="5.05" lengthAdjust="spacingAndGlyphs">33.</text><text x="751.04" y="647.47" textLength="2.62" lengthAdjust="spacingAndGlyphs">A</text><text x="764.71" y="647.47" textLength="8.08" lengthAdjust="spacingAndGlyphs">4106</text><text x="780.80" y="647.47" textLength="85.67" lengthAdjust="spacingAndGlyphs">WEST FACADE  6: ELEVATION, PLAN &amp; SECTION</text><text x="915.00" y="647.47" textLength="11.70" lengthAdjust="spacingAndGlyphs">1 : 50</text><text x="662.45" y="653.89" textLength="5.05" lengthAdjust="spacingAndGlyphs">34.</text><text x="751.04" y="653.89" textLength="2.62" lengthAdjust="spacingAndGlyphs">A</text><text x="764.71" y="653.89" textLength="8.08" lengthAdjust="spacingAndGlyphs">4107</text><text x="780.80" y="653.89" textLength="86.88" lengthAdjust="spacingAndGlyphs">SOUTH FACADE 7: ELEVATION, PLAN &amp; SECTION</text><text x="915.00" y="653.89" textLength="11.70" lengthAdjust="spacingAndGlyphs">1 : 50</text><text x="662.45" y="660.31" textLength="5.05" lengthAdjust="spacingAndGlyphs">35.</text><text x="751.04" y="660.31" textLength="2.62" lengthAdjust="spacingAndGlyphs">A</text><text x="764.71" y="660.31" textLength="8.08" lengthAdjust="spacingAndGlyphs">4108</text><text x="780.80" y="660.31" textLength="86.88" lengthAdjust="spacingAndGlyphs">SOUTH FACADE 8: ELEVATION, PLAN &amp; SECTION</text><text x="915.00" y="660.31" textLength="11.70" lengthAdjust="spacingAndGlyphs">1 : 50</text><text x="662.45" y="666.73" textLength="5.05" lengthAdjust="spacingAndGlyphs">36.</text><text x="751.04" y="666.73" textLength="2.62" lengthAdjust="spacingAndGlyphs">A</text><text x="764.71" y="666.73" textLength="8.08" lengthAdjust="spacingAndGlyphs">4109</text><text x="780.80" y="666.73" textLength="86.88" lengthAdjust="spacingAndGlyphs">SOUTH FACADE 9: ELEVATION, PLAN &amp; SECTION</text><text x="915.00" y="666.73" textLength="11.70" lengthAdjust="spacingAndGlyphs">1 : 50</text><text x="662.45" y="673.15" textLength="5.05" lengthAdjust="spacingAndGlyphs">37.</text><text x="751.04" y="673.15" textLength="2.62" lengthAdjust="spacingAndGlyphs">A</text><text x="764.81" y="673.15" textLength="7.88" lengthAdjust="spacingAndGlyphs">4110</text><text x="780.80" y="673.15" textLength="88.90" lengthAdjust="spacingAndGlyphs">SOUTH FACADE 10: ELEVATION, PLAN &amp; SECTION</text><text x="915.00" y="673.15" textLength="11.70" lengthAdjust="spacingAndGlyphs">1 : 50</text><text x="662.45" y="679.57" textLength="5.05" lengthAdjust="spacingAndGlyphs">38.</text><text x="751.04" y="679.57" textLength="2.62" lengthAdjust="spacingAndGlyphs">A</text><text x="764.91" y="679.57" textLength="7.68" lengthAdjust="spacingAndGlyphs">4111</text><text x="780.80" y="679.57" textLength="88.70" lengthAdjust="spacingAndGlyphs">SOUTH FACADE 11: ELEVATION, PLAN &amp; SECTION</text><text x="915.00" y="679.57" textLength="11.70" lengthAdjust="spacingAndGlyphs">1 : 50</text><text x="662.45" y="685.99" textLength="5.05" lengthAdjust="spacingAndGlyphs">39.</text><text x="751.04" y="685.99" textLength="2.62" lengthAdjust="spacingAndGlyphs">A</text><text x="764.81" y="685.99" textLength="7.88" lengthAdjust="spacingAndGlyphs">4112</text><text x="780.80" y="685.99" textLength="88.90" lengthAdjust="spacingAndGlyphs">SOUTH FACADE 12: ELEVATION, PLAN &amp; SECTION</text><text x="915.00" y="685.99" textLength="11.70" lengthAdjust="spacingAndGlyphs">1 : 50</text><text x="662.45" y="692.41" textLength="5.05" lengthAdjust="spacingAndGlyphs">40.</text><text x="706.90" y="692.41" textLength="17.50" lengthAdjust="spacingAndGlyphs">2. TOWER</text><text x="751.04" y="692.41" textLength="2.62" lengthAdjust="spacingAndGlyphs">A</text><text x="764.71" y="692.41" textLength="8.08" lengthAdjust="spacingAndGlyphs">4201</text><text x="780.80" y="692.41" textLength="31.02" lengthAdjust="spacingAndGlyphs">TOWER 1: PLANS</text><text x="915.00" y="692.41" textLength="11.70" lengthAdjust="spacingAndGlyphs">1 : 50</text><text x="662.45" y="698.83" textLength="5.05" lengthAdjust="spacingAndGlyphs">41.</text><text x="751.04" y="698.83" textLength="2.62" lengthAdjust="spacingAndGlyphs">A</text><text x="764.71" y="698.83" textLength="8.08" lengthAdjust="spacingAndGlyphs">4202</text><text x="780.80" y="698.83" textLength="64.87" lengthAdjust="spacingAndGlyphs">TOWER 1: ELEVATION AND SECTION</text><text x="915.00" y="698.83" textLength="11.70" lengthAdjust="spacingAndGlyphs">1 : 50</text><text x="662.45" y="705.25" textLength="5.05" lengthAdjust="spacingAndGlyphs">42.</text><text x="751.04" y="705.25" textLength="2.62" lengthAdjust="spacingAndGlyphs">A</text><text x="764.71" y="705.25" textLength="8.08" lengthAdjust="spacingAndGlyphs">4203</text><text x="780.80" y="705.25" textLength="79.21" lengthAdjust="spacingAndGlyphs">TOWER 2: PLANS, ELEVATION AND SECTION</text><text x="915.00" y="705.25" textLength="11.70" lengthAdjust="spacingAndGlyphs">1 : 50</text><text x="662.45" y="711.67" textLength="5.05" lengthAdjust="spacingAndGlyphs">43.</text><text x="751.04" y="711.67" textLength="2.62" lengthAdjust="spacingAndGlyphs">A</text><text x="764.71" y="711.67" textLength="8.08" lengthAdjust="spacingAndGlyphs">4301</text><text x="780.80" y="711.67" textLength="55.52" lengthAdjust="spacingAndGlyphs">CANOPY 1: ELEVATION &amp; PLAN</text><text x="915.00" y="711.67" textLength="11.70" lengthAdjust="spacingAndGlyphs">1 : 20</text><text x="662.45" y="718.09" textLength="5.05" lengthAdjust="spacingAndGlyphs">44.</text><text x="751.04" y="718.09" textLength="2.62" lengthAdjust="spacingAndGlyphs">A</text><text x="764.71" y="718.09" textLength="8.08" lengthAdjust="spacingAndGlyphs">4302</text><text x="780.80" y="718.09" textLength="36.88" lengthAdjust="spacingAndGlyphs">CANOPY 1: SECTION</text><text x="915.00" y="718.09" textLength="11.70" lengthAdjust="spacingAndGlyphs">1 : 20</text><text x="662.45" y="724.51" textLength="5.05" lengthAdjust="spacingAndGlyphs">45.</text><text x="751.04" y="724.51" textLength="2.62" lengthAdjust="spacingAndGlyphs">A</text><text x="764.71" y="724.51" textLength="8.08" lengthAdjust="spacingAndGlyphs">4303</text><text x="780.80" y="724.51" textLength="73.70" lengthAdjust="spacingAndGlyphs">CANOPY 2: ELEVATION, PLAN &amp; SECTION</text><text x="915.00" y="724.51" textLength="11.70" lengthAdjust="spacingAndGlyphs">1 : 20</text><text x="662.45" y="730.93" textLength="5.05" lengthAdjust="spacingAndGlyphs">46.</text><text x="706.90" y="730.93" textLength="14.94" lengthAdjust="spacingAndGlyphs">4. DOME</text><text x="751.04" y="730.93" textLength="2.62" lengthAdjust="spacingAndGlyphs">A</text><text x="764.71" y="730.93" textLength="8.08" lengthAdjust="spacingAndGlyphs">4401</text><text x="780.80" y="730.93" textLength="25.44" lengthAdjust="spacingAndGlyphs">DOME: PLANS</text><text x="915.00" y="730.93" textLength="11.70" lengthAdjust="spacingAndGlyphs">1 : 20</text><text x="662.45" y="737.35" textLength="5.05" lengthAdjust="spacingAndGlyphs">47.</text><text x="751.04" y="737.35" textLength="2.62" lengthAdjust="spacingAndGlyphs">A</text><text x="764.71" y="737.35" textLength="8.08" lengthAdjust="spacingAndGlyphs">4402</text><text x="780.80" y="737.35" textLength="54.17" lengthAdjust="spacingAndGlyphs">DOME: ELEVATION &amp; SECTION</text><text x="915.00" y="737.35" textLength="11.70" lengthAdjust="spacingAndGlyphs">1 : 20</text><text x="662.45" y="743.77" textLength="5.05" lengthAdjust="spacingAndGlyphs">48.</text><text x="751.04" y="743.77" textLength="2.62" lengthAdjust="spacingAndGlyphs">A</text><text x="764.71" y="743.77" textLength="8.08" lengthAdjust="spacingAndGlyphs">4403</text><text x="780.80" y="743.77" textLength="54.17" lengthAdjust="spacingAndGlyphs">DOME: ELEVATION &amp; SECTION</text><text x="915.00" y="743.77" textLength="11.70" lengthAdjust="spacingAndGlyphs">1 : 20</text><text x="662.45" y="753.37" textLength="5.05" lengthAdjust="spacingAndGlyphs">49.</text><text x="669.60" y="753.37" textLength="20.66" lengthAdjust="spacingAndGlyphs">5. PATTERN</text><text x="706.90" y="753.37" textLength="34.39" lengthAdjust="spacingAndGlyphs">1. FLOOR PATTERN</text><text x="751.04" y="753.37" textLength="2.62" lengthAdjust="spacingAndGlyphs">A</text><text x="764.71" y="753.37" textLength="8.08" lengthAdjust="spacingAndGlyphs">5101</text><text x="780.80" y="753.37" textLength="62.65" lengthAdjust="spacingAndGlyphs">BASEMENT FLOOR PATTERN PLAN</text><text x="913.80" y="753.37" textLength="15.20" lengthAdjust="spacingAndGlyphs">1 : 250</text><text x="662.45" y="759.79" textLength="5.05" lengthAdjust="spacingAndGlyphs">50.</text><text x="751.04" y="759.79" textLength="2.62" lengthAdjust="spacingAndGlyphs">A</text><text x="764.71" y="759.79" textLength="8.08" lengthAdjust="spacingAndGlyphs">5102</text><text x="780.80" y="759.79" textLength="58.41" lengthAdjust="spacingAndGlyphs">GROUND FLOOR PATTERN PLAN</text><text x="913.80" y="759.79" textLength="15.20" lengthAdjust="spacingAndGlyphs">1 : 250</text><text x="662.45" y="766.21" textLength="5.05" lengthAdjust="spacingAndGlyphs">51.</text><text x="751.04" y="766.21" textLength="2.62" lengthAdjust="spacingAndGlyphs">A</text><text x="764.71" y="766.21" textLength="8.08" lengthAdjust="spacingAndGlyphs">5103</text><text x="780.80" y="766.21" textLength="52.76" lengthAdjust="spacingAndGlyphs">FIRST FLOOR PATTERN PLAN</text><text x="913.80" y="766.21" textLength="15.20" lengthAdjust="spacingAndGlyphs">1 : 250</text><text x="662.45" y="772.63" textLength="5.05" lengthAdjust="spacingAndGlyphs">52.</text><text x="706.90" y="772.63" textLength="19.52" lengthAdjust="spacingAndGlyphs">2. PARTIAL</text><text x="751.04" y="772.63" textLength="2.62" lengthAdjust="spacingAndGlyphs">A</text><text x="764.71" y="772.63" textLength="8.08" lengthAdjust="spacingAndGlyphs">5201</text><text x="780.80" y="772.63" textLength="103.23" lengthAdjust="spacingAndGlyphs">LOBBY FLOOR PATTERN PARTIAL PLAN, GROUND FLOOR</text><text x="915.00" y="772.63" textLength="11.70" lengthAdjust="spacingAndGlyphs">1 : 50</text><text x="662.45" y="779.05" textLength="5.05" lengthAdjust="spacingAndGlyphs">53.</text><text x="751.04" y="779.05" textLength="2.62" lengthAdjust="spacingAndGlyphs">A</text><text x="764.71" y="779.05" textLength="8.08" lengthAdjust="spacingAndGlyphs">5202</text><text x="780.80" y="779.05" textLength="116.35" lengthAdjust="spacingAndGlyphs">RESTAURANT  FLOOR PATTERN PARTIAL PLAN, GROUND FLOOR</text><text x="915.00" y="779.05" textLength="11.70" lengthAdjust="spacingAndGlyphs">1 : 50</text><text x="662.45" y="785.47" textLength="5.05" lengthAdjust="spacingAndGlyphs">54.</text><text x="706.90" y="785.47" textLength="20.53" lengthAdjust="spacingAndGlyphs">3. TOILET &amp;</text><text x="751.04" y="785.47" textLength="2.62" lengthAdjust="spacingAndGlyphs">A</text><text x="764.71" y="785.47" textLength="8.08" lengthAdjust="spacingAndGlyphs">5301</text><text x="780.80" y="785.47" textLength="105.65" lengthAdjust="spacingAndGlyphs">CHANGING ROOM - BOSTER, PLAN &amp; INTERIOR ELEVATION</text><text x="915.00" y="785.47" textLength="11.70" lengthAdjust="spacingAndGlyphs">1 : 50</text><text x="662.45" y="791.89" textLength="5.05" lengthAdjust="spacingAndGlyphs">55.</text><text x="713.30" y="791.89" textLength="32.10" lengthAdjust="spacingAndGlyphs">CHANGING ROOM</text><text x="751.04" y="791.89" textLength="2.62" lengthAdjust="spacingAndGlyphs">A</text><text x="764.71" y="791.89" textLength="8.08" lengthAdjust="spacingAndGlyphs">5302</text><text x="780.80" y="791.89" textLength="108.48" lengthAdjust="spacingAndGlyphs">CHANGING ROOM - SWIMMER, PLAN &amp; INTERIOR ELEVATION</text><text x="915.00" y="791.89" textLength="11.70" lengthAdjust="spacingAndGlyphs">1 : 50</text><text x="662.45" y="798.31" textLength="5.05" lengthAdjust="spacingAndGlyphs">56.</text><text x="751.04" y="798.31" textLength="2.62" lengthAdjust="spacingAndGlyphs">A</text><text x="764.71" y="798.31" textLength="8.08" lengthAdjust="spacingAndGlyphs">5303</text><text x="780.80" y="798.31" textLength="102.96" lengthAdjust="spacingAndGlyphs">CHANGING ROOM - STORE, PLAN &amp; INTERIOR ELEVATION</text><text x="915.00" y="798.31" textLength="11.70" lengthAdjust="spacingAndGlyphs">1 : 50</text><text x="662.45" y="804.73" textLength="5.05" lengthAdjust="spacingAndGlyphs">57.</text><text x="751.04" y="804.73" textLength="2.62" lengthAdjust="spacingAndGlyphs">A</text><text x="764.71" y="804.73" textLength="8.08" lengthAdjust="spacingAndGlyphs">5304</text><text x="780.80" y="804.73" textLength="99.19" lengthAdjust="spacingAndGlyphs">CHANGING ROOM - WAIT, PLAN &amp; INTERIOR ELEVATION</text><text x="915.00" y="804.73" textLength="11.70" lengthAdjust="spacingAndGlyphs">1 : 50</text><text x="662.45" y="811.15" textLength="5.05" lengthAdjust="spacingAndGlyphs">58.</text><text x="751.04" y="811.15" textLength="2.62" lengthAdjust="spacingAndGlyphs">A</text><text x="764.71" y="811.15" textLength="8.08" lengthAdjust="spacingAndGlyphs">5305</text><text x="780.80" y="811.15" textLength="129.14" lengthAdjust="spacingAndGlyphs">PUBLIC TOILET &amp; LOADING DOCK TOILET, PLAN &amp; INTERIOR ELEVATION</text><text x="915.00" y="811.15" textLength="11.70" lengthAdjust="spacingAndGlyphs">1 : 50</text><text x="662.45" y="817.57" textLength="5.05" lengthAdjust="spacingAndGlyphs">59.</text><text x="751.04" y="817.57" textLength="2.62" lengthAdjust="spacingAndGlyphs">A</text><text x="764.71" y="817.57" textLength="8.08" lengthAdjust="spacingAndGlyphs">5306</text><text x="780.80" y="817.57" textLength="104.37" lengthAdjust="spacingAndGlyphs">MARKETING OFFICE TOILET PLAN &amp; INTERIOR ELEVATION</text><text x="915.00" y="817.57" textLength="11.70" lengthAdjust="spacingAndGlyphs">1 : 50</text><text x="662.45" y="823.99" textLength="5.05" lengthAdjust="spacingAndGlyphs">60.</text><text x="751.04" y="823.99" textLength="2.62" lengthAdjust="spacingAndGlyphs">A</text><text x="764.71" y="823.99" textLength="8.08" lengthAdjust="spacingAndGlyphs">5307</text><text x="780.80" y="823.99" textLength="103.56" lengthAdjust="spacingAndGlyphs">PM'S TOILET &amp; GYM TOILET PLAN &amp; INTERIOR ELEVATION</text><text x="915.00" y="823.99" textLength="11.70" lengthAdjust="spacingAndGlyphs">1 : 50</text><text x="662.45" y="830.41" textLength="5.05" lengthAdjust="spacingAndGlyphs">61.</text><text x="706.90" y="830.41" textLength="32.58" lengthAdjust="spacingAndGlyphs">4. INTERIOR ELEV.</text><text x="751.04" y="830.41" textLength="2.62" lengthAdjust="spacingAndGlyphs">A</text><text x="764.71" y="830.41" textLength="8.08" lengthAdjust="spacingAndGlyphs">5401</text><text x="780.80" y="830.41" textLength="48.05" lengthAdjust="spacingAndGlyphs">PRE FUNCTION, FUNCTION</text><text x="913.80" y="830.41" textLength="15.20" lengthAdjust="spacingAndGlyphs">1 : 100</text><text x="662.45" y="836.83" textLength="5.05" lengthAdjust="spacingAndGlyphs">62.</text><text x="751.04" y="836.83" textLength="2.62" lengthAdjust="spacingAndGlyphs">A</text><text x="764.71" y="836.83" textLength="8.08" lengthAdjust="spacingAndGlyphs">5402</text><text x="780.80" y="836.83" textLength="42.19" lengthAdjust="spacingAndGlyphs">RETAIL &amp; RESTAURANT</text><text x="915.00" y="836.83" textLength="11.70" lengthAdjust="spacingAndGlyphs">1 : 50</text><text x="662.45" y="847.67" textLength="5.05" lengthAdjust="spacingAndGlyphs">63.</text><text x="669.60" y="847.67" textLength="37.56" lengthAdjust="spacingAndGlyphs">6. EXTERIOR WORKS</text><text x="706.90" y="847.67" textLength="34.72" lengthAdjust="spacingAndGlyphs">1. SWIMMING POOL</text><text x="751.04" y="847.67" textLength="2.62" lengthAdjust="spacingAndGlyphs">A</text><text x="764.71" y="847.67" textLength="8.08" lengthAdjust="spacingAndGlyphs">6101</text><text x="780.80" y="847.67" textLength="41.52" lengthAdjust="spacingAndGlyphs">SWIMMING POOL PLAN</text><text x="913.80" y="847.67" textLength="15.20" lengthAdjust="spacingAndGlyphs">1 : 100</text><text x="662.45" y="854.09" textLength="5.05" lengthAdjust="spacingAndGlyphs">64.</text><text x="676.00" y="854.09" textLength="26.25" lengthAdjust="spacingAndGlyphs">&amp; LANDSCAPE</text><text x="764.71" y="854.09" textLength="8.08" lengthAdjust="spacingAndGlyphs">6102</text><text x="780.80" y="854.09" textLength="47.78" lengthAdjust="spacingAndGlyphs">SWIMMING POOL SECTION</text><text x="913.80" y="854.09" textLength="15.20" lengthAdjust="spacingAndGlyphs">1 : 100</text><text x="662.45" y="860.51" textLength="5.05" lengthAdjust="spacingAndGlyphs">65.</text><text x="751.04" y="860.51" textLength="2.62" lengthAdjust="spacingAndGlyphs">A</text><text x="764.71" y="860.51" textLength="8.08" lengthAdjust="spacingAndGlyphs">6103</text><text x="780.80" y="860.51" textLength="61.71" lengthAdjust="spacingAndGlyphs">CHILDREN POOL PLAN &amp; SECTION</text><text x="915.00" y="860.51" textLength="11.70" lengthAdjust="spacingAndGlyphs">1 : 50</text><text x="662.45" y="866.93" textLength="5.05" lengthAdjust="spacingAndGlyphs">66.</text><text x="751.04" y="866.93" textLength="2.62" lengthAdjust="spacingAndGlyphs">A</text><text x="764.71" y="866.93" textLength="8.08" lengthAdjust="spacingAndGlyphs">6104</text><text x="780.80" y="866.93" textLength="55.52" lengthAdjust="spacingAndGlyphs">LOTUS POND PLAN &amp; SECTION</text><text x="915.00" y="866.93" textLength="11.70" lengthAdjust="spacingAndGlyphs">1 : 50</text><text x="662.45" y="873.35" textLength="5.05" lengthAdjust="spacingAndGlyphs">67.</text><text x="751.04" y="873.35" textLength="2.62" lengthAdjust="spacingAndGlyphs">A</text><text x="764.71" y="873.35" textLength="8.08" lengthAdjust="spacingAndGlyphs">6105</text><text x="780.80" y="873.35" textLength="95.30" lengthAdjust="spacingAndGlyphs">POOL BAR, SLIDER &amp; BRIDGE ELEVATION &amp; SECTION</text><text x="915.00" y="873.35" textLength="11.70" lengthAdjust="spacingAndGlyphs">1 : 50</text></g></svg>
<svg class="r" style="left:960px;top:400px;" width="300" height="90" viewBox="0 0 300 90"><path d="M5.80 5.20H283.30M5.80 18.20H283.30M5.80 24.62H283.30M5.80 31.04H283.30M5.80 37.46H283.30M5.80 41.20H283.30M5.80 47.62H283.30M5.80 54.04H283.30M5.80 60.46H283.30M5.80 66.88H283.30M5.80 73.30H283.30M5.80 79.72H283.30M6.30 4.70V80.22M15.30 4.70V80.22M52.40 4.70V80.22M94.60 4.70V80.22M108.40 4.70V80.22M126.40 4.70V80.22M259.70 4.70V80.22M282.80 4.70V80.22" stroke="#00ffff" stroke-width="1.15" fill="none"/><g transform="translate(-960,-400)" fill="#00ffff" font-family="Liberation Sans,sans-serif" font-weight="700" font-size="5px" stroke="#00ffff" stroke-width="0.28"><text x="968.13" y="413.60" textLength="5.94" lengthAdjust="spacingAndGlyphs">NO.</text><text x="987.72" y="413.60" textLength="12.26" lengthAdjust="spacingAndGlyphs">GROUP</text><text x="1023.28" y="413.60" textLength="20.43" lengthAdjust="spacingAndGlyphs">SUB-GROUP</text><text x="1056.67" y="413.60" textLength="9.66" lengthAdjust="spacingAndGlyphs">CODE</text><text x="1071.83" y="413.60" textLength="11.15" lengthAdjust="spacingAndGlyphs">SHEET</text><text x="1139.58" y="413.60" textLength="26.93" lengthAdjust="spacingAndGlyphs">DRAWING NAME</text><text x="1225.58" y="413.60" textLength="11.33" lengthAdjust="spacingAndGlyphs">SCALE</text><text x="969.35" y="424.07" textLength="5.05" lengthAdjust="spacingAndGlyphs">68.</text><text x="1013.80" y="424.07" textLength="29.55" lengthAdjust="spacingAndGlyphs">2. PLAYGROUND</text><text x="1060.19" y="424.07" textLength="2.62" lengthAdjust="spacingAndGlyphs">A</text><text x="1073.76" y="424.07" textLength="8.08" lengthAdjust="spacingAndGlyphs">6201</text><text x="1089.80" y="424.07" textLength="79.48" lengthAdjust="spacingAndGlyphs">PLAYGROUND PLAN, ELEVATION &amp; SECTION</text><text x="1223.20" y="424.07" textLength="15.20" lengthAdjust="spacingAndGlyphs">1 : 100</text><text x="969.35" y="430.49" textLength="5.05" lengthAdjust="spacingAndGlyphs">69.</text><text x="1060.19" y="430.49" textLength="2.62" lengthAdjust="spacingAndGlyphs">A</text><text x="1073.76" y="430.49" textLength="8.08" lengthAdjust="spacingAndGlyphs">6202</text><text x="1089.80" y="430.49" textLength="61.44" lengthAdjust="spacingAndGlyphs">HUT PLAN, ELEVATION &amp; SECTION</text><text x="1224.40" y="430.49" textLength="11.70" lengthAdjust="spacingAndGlyphs">1 : 50</text><text x="969.35" y="436.91" textLength="5.05" lengthAdjust="spacingAndGlyphs">70.</text><text x="1013.80" y="436.91" textLength="16.89" lengthAdjust="spacingAndGlyphs">3. DETAIL</text><text x="1060.19" y="436.91" textLength="2.62" lengthAdjust="spacingAndGlyphs">A</text><text x="1073.76" y="436.91" textLength="8.08" lengthAdjust="spacingAndGlyphs">6301</text><text x="1089.80" y="436.91" textLength="44.48" lengthAdjust="spacingAndGlyphs">SWIMMING POOL DETAIL</text><text x="1224.40" y="436.91" textLength="11.70" lengthAdjust="spacingAndGlyphs">1 : 10</text><text x="969.35" y="447.07" textLength="5.05" lengthAdjust="spacingAndGlyphs">71.</text><text x="976.50" y="447.07" textLength="24.63" lengthAdjust="spacingAndGlyphs">A. SCHEDULE</text><text x="1013.80" y="447.07" textLength="32.91" lengthAdjust="spacingAndGlyphs">1. DOOR, WINDOW</text><text x="1060.19" y="447.07" textLength="2.62" lengthAdjust="spacingAndGlyphs">A</text><text x="1073.76" y="447.07" textLength="8.08" lengthAdjust="spacingAndGlyphs">8101</text><text x="1089.80" y="447.07" textLength="91.79" lengthAdjust="spacingAndGlyphs">DOORS &amp; WINDOWS KEY PLAN, BASEMENT FLOOR</text><text x="1223.20" y="447.07" textLength="15.20" lengthAdjust="spacingAndGlyphs">1 : 250</text><text x="969.35" y="453.49" textLength="5.05" lengthAdjust="spacingAndGlyphs">72.</text><text x="1020.20" y="453.49" textLength="13.93" lengthAdjust="spacingAndGlyphs">&amp; WALL</text><text x="1060.19" y="453.49" textLength="2.62" lengthAdjust="spacingAndGlyphs">A</text><text x="1073.76" y="453.49" textLength="8.08" lengthAdjust="spacingAndGlyphs">8102</text><text x="1089.80" y="453.49" textLength="87.55" lengthAdjust="spacingAndGlyphs">DOORS &amp; WINDOWS KEY PLAN, GROUND FLOOR</text><text x="1223.20" y="453.49" textLength="15.20" lengthAdjust="spacingAndGlyphs">1 : 250</text><text x="969.35" y="459.91" textLength="5.05" lengthAdjust="spacingAndGlyphs">73.</text><text x="1060.19" y="459.91" textLength="2.62" lengthAdjust="spacingAndGlyphs">A</text><text x="1073.76" y="459.91" textLength="8.08" lengthAdjust="spacingAndGlyphs">8103</text><text x="1089.80" y="459.91" textLength="81.90" lengthAdjust="spacingAndGlyphs">DOORS &amp; WINDOWS KEY PLAN, FIRST FLOOR</text><text x="1223.20" y="459.91" textLength="15.20" lengthAdjust="spacingAndGlyphs">1 : 250</text><text x="969.35" y="466.33" textLength="5.05" lengthAdjust="spacingAndGlyphs">74.</text><text x="1060.19" y="466.33" textLength="2.62" lengthAdjust="spacingAndGlyphs">A</text><text x="1073.76" y="466.33" textLength="8.08" lengthAdjust="spacingAndGlyphs">8104</text><text x="1089.80" y="466.33" textLength="31.90" lengthAdjust="spacingAndGlyphs">DOOR SCHEDULE</text><text x="1223.20" y="466.33" textLength="8.88" lengthAdjust="spacingAndGlyphs">N.T.S</text><text x="969.35" y="472.75" textLength="5.05" lengthAdjust="spacingAndGlyphs">75.</text><text x="1060.19" y="472.75" textLength="2.62" lengthAdjust="spacingAndGlyphs">A</text><text x="1073.76" y="472.75" textLength="8.08" lengthAdjust="spacingAndGlyphs">8105</text><text x="1089.80" y="472.75" textLength="26.45" lengthAdjust="spacingAndGlyphs">WINDOW TYPE</text><text x="1224.40" y="472.75" textLength="11.70" lengthAdjust="spacingAndGlyphs">1 : 50</text><text x="969.35" y="479.17" textLength="5.05" lengthAdjust="spacingAndGlyphs">76.</text><text x="1013.80" y="479.17" textLength="40.99" lengthAdjust="spacingAndGlyphs">2. EXTERIOR LIGHTING</text><text x="1060.19" y="479.17" textLength="2.62" lengthAdjust="spacingAndGlyphs">A</text><text x="1073.76" y="479.17" textLength="8.08" lengthAdjust="spacingAndGlyphs">8201</text><text x="1089.80" y="479.17" textLength="47.85" lengthAdjust="spacingAndGlyphs">EXTERIOR LIGHTING PLAN</text><text x="1223.20" y="479.17" textLength="15.20" lengthAdjust="spacingAndGlyphs">1 : 500</text></g></svg>
<svg class="r" style="left:20px;top:890px;" width="60" height="92" viewBox="0 0 60 92"><g stroke="#4156b8" stroke-width="1.25" fill="none" stroke-linecap="round"><path d="M3.4 2.3V87.9H53.6Z"/><path d="M3.4 80.4H11.6V87.9"/><path d="M5.3 28.3L11.4 34.4L18 28M11.4 34.4V40.3"/><path d="M31.2 74.5L43.5 86.8M44.5 73.4L31.2 86.8"/></g></svg>
<div class="r" style="left:553px;top:969px;width:54px;height:25px;background:linear-gradient(to bottom,#4d4d4d 0,#555 40%,#6e6e6e 100%);border-radius:3px 0 0 3px;"></div>
<div class="r" style="left:606px;top:969px;width:755px;height:25px;background:#dedede;border-radius:2px;"></div>
<svg class="r" style="left:556px;top:972px;" width="5" height="17" viewBox="0 0 5 17"><rect x="0" y="0" width="2" height="2" fill="#9a9a9a"/><rect x="3" y="0" width="2" height="2" fill="#9a9a9a"/><rect x="0" y="3" width="2" height="2" fill="#9a9a9a"/><rect x="3" y="3" width="2" height="2" fill="#9a9a9a"/><rect x="0" y="6" width="2" height="2" fill="#9a9a9a"/><rect x="3" y="6" width="2" height="2" fill="#9a9a9a"/><rect x="0" y="9" width="2" height="2" fill="#9a9a9a"/><rect x="3" y="9" width="2" height="2" fill="#9a9a9a"/><rect x="0" y="12" width="2" height="2" fill="#9a9a9a"/><rect x="3" y="12" width="2" height="2" fill="#9a9a9a"/><rect x="0" y="15" width="2" height="2" fill="#9a9a9a"/><rect x="3" y="15" width="2" height="2" fill="#9a9a9a"/></svg>
<svg class="r" style="left:567px;top:977px;" width="9" height="8" viewBox="0 0 9 8"><path d="M1 1L8 7M8 1L1 7" stroke="#f4f4f4" stroke-width="1.8" fill="none"/></svg>
<svg class="r" style="left:587px;top:974px;" width="14" height="14" viewBox="0 0 14 14"><path d="M2.2 1.2A3.4 3.4 0 0 0 1 6.2A3.4 3.4 0 0 0 5.6 7.2L10.8 12.6A1.3 1.3 0 0 0 12.7 10.8L7.2 5.6A3.4 3.4 0 0 0 6.2 1L4.2 3.2L5.2 4.6L4.4 5.4L2.8 4.4Z" fill="#f2f2f2" stroke="#555" stroke-width=".5"/></svg>
<div class="r" style="left:611px;top:974px;width:15px;height:14px;background:#d2cbd2;border:1px solid #8f8f8f;box-sizing:border-box;border-radius:2px;"></div>
<svg class="r" style="left:613px;top:977px;" width="11" height="9" viewBox="0 0 11 9"><path d="M1 1L5 4L1 7" stroke="#444" stroke-width="1.3" fill="none"/><path d="M6 7.5H10" stroke="#444" stroke-width="1.3"/></svg>
<svg class="r" style="left:629.5px;top:979px;" width="5" height="2.5" viewBox="0 0 5 2.5"><path d="M0 0H5L2.5 2.5Z" fill="#777"/></svg>
<span class="t" style="left:642px;top:975.20px;font-size:12px;color:#8c8c8c;transform:scaleX(0.930);font-style:italic;font-family:'Liberation Mono',monospace;">Type</span>
<span class="t" style="left:677px;top:975.20px;font-size:12px;color:#8c8c8c;transform:scaleX(0.914);font-style:italic;font-family:'Liberation Mono',monospace;">a</span>
<span class="t" style="left:691px;top:975.20px;font-size:12px;color:#8c8c8c;transform:scaleX(0.959);font-style:italic;font-family:'Liberation Mono',monospace;">command</span>
<svg class="r" style="left:1350px;top:978px;" width="8" height="5" viewBox="0 0 8 5"><path d="M0 5H8L4 0Z" fill="#222"/></svg>
<div class="r" style="left:0px;top:995px;width:1918px;height:33px;background:#3a3a3a;"></div>
<svg class="r" style="left:14px;top:995px;" width="64" height="19" viewBox="0 0 64 19"><defs><linearGradient id="gM" x1="0" y1="0" x2="0" y2="1"><stop offset="0" stop-color="#4a4a4a"/><stop offset=".3" stop-color="#585757"/><stop offset="1" stop-color="#5e5d5d"/></linearGradient></defs><path d="M2 0H62C58 3 58 9 56 14C55 17 54 17.5 50 17.5H15C11 17.5 10 17 9 14C7 9 7 3 2 0Z" fill="url(#gM)"/></svg>
<svg class="r" style="left:70px;top:995px;" width="80" height="19" viewBox="0 0 80 19"><defs><linearGradient id="gL" x1="0" y1="0" x2="0" y2="1"><stop offset="0" stop-color="#696767"/><stop offset="1" stop-color="#8d8c8c"/></linearGradient></defs><path d="M2 0H78C73 3 72 9 70 14C69 17.5 67 18.2 63 18.2H19C15 18.2 13 17.5 12 14C10 9 9 3 2 0Z" fill="url(#gL)"/></svg>
<svg class="r" style="left:146px;top:996px;" width="24" height="16" viewBox="0 0 24 16"><path d="M8 0H23C22 9 19 15.5 10 15.5H0.5C2 9 3 4 8 0Z" fill="#4b4b4b"/><path d="M8 8H16M12 4V12" stroke="#d0d0d0" stroke-width="1.6" fill="none"/></svg>
<span class="t" style="left:31px;top:998.14px;font-size:12px;color:#bdbdbd;transform:scaleX(1.039);">Model</span>
<span class="t" style="left:87px;top:998.14px;font-size:12px;color:#fff;transform:scaleX(0.929);font-weight:700;">Layout1</span>
<div class="r" style="left:1449px;top:995px;width:458px;height:28px;background:#6a6a6a;"></div>
<div class="r" style="left:0px;top:1023px;width:1918px;height:1px;background:#2e2e2e;"></div>
<div class="r" style="left:1450px;top:996px;width:42px;height:26px;background:#4f4f4f;border:1px solid #7b7b7b;box-sizing:border-box;"></div>
<div class="r" style="left:1493px;top:996px;width:103px;height:26px;background:#4f4f4f;border:1px solid #7b7b7b;box-sizing:border-box;"></div>
<div class="r" style="left:1597px;top:996px;width:64px;height:26px;background:#4f4f4f;border:1px solid #7b7b7b;box-sizing:border-box;"></div>
<div class="r" style="left:1662px;top:996px;width:74px;height:26px;background:#4f4f4f;border:1px solid #7b7b7b;box-sizing:border-box;"></div>
<div class="r" style="left:1737px;top:996px;width:40px;height:26px;background:#4f4f4f;border:1px solid #7b7b7b;box-sizing:border-box;"></div>
<div class="r" style="left:1778px;top:996px;width:25px;height:26px;background:#4f4f4f;border:1px solid #7b7b7b;box-sizing:border-box;"></div>
<div class="r" style="left:1804px;top:996px;width:26px;height:26px;background:#4f4f4f;border:1px solid #7b7b7b;box-sizing:border-box;"></div>
<div class="r" style="left:1831px;top:996px;width:24px;height:26px;background:#4f4f4f;border:1px solid #7b7b7b;box-sizing:border-box;"></div>
<div class="r" style="left:1856px;top:996px;width:50px;height:26px;background:#4f4f4f;border:1px solid #7b7b7b;box-sizing:border-box;"></div>
<div class="r" style="left:1495px;top:998px;width:22px;height:22px;background:#5c8bc4;"></div>
<div class="r" style="left:1621.5px;top:998px;width:22.5px;height:22px;background:#5c8bc4;"></div>
<span class="t" style="left:1454px;top:1002.63px;font-size:12.6px;color:#fff;transform:scaleX(0.824);">PAPER</span>
<svg class="r" style="left:1546.0px;top:1006.5px;" width="7" height="4" viewBox="0 0 7 4"><path d="M0 0H7L3.5 4Z" fill="#fff"/></svg>
<svg class="r" style="left:1584.5px;top:1006.5px;" width="7" height="4" viewBox="0 0 7 4"><path d="M0 0H7L3.5 4Z" fill="#fff"/></svg>
<svg class="r" style="left:1648.5px;top:1006.5px;" width="7" height="4" viewBox="0 0 7 4"><path d="M0 0H7L3.5 4Z" fill="#fff"/></svg>
<svg class="r" style="left:1766.0px;top:1006.5px;" width="7" height="4" viewBox="0 0 7 4"><path d="M0 0H7L3.5 4Z" fill="#fff"/></svg>
<svg class="r" style="left:57px;top:14px;" width="16" height="16" viewBox="0 0 16 16"><path d="M0 2H12L16 6V14H0Z" fill="#fff"/><path d="M12 2V6H16Z" fill="#d9d4d6"/></svg>
<svg class="r" style="left:81px;top:14px;" width="16" height="16" viewBox="0 0 16 16"><path d="M0 2H7L8.5 4H12V7H3.5L0 15Z" fill="#fff"/><path d="M3.8 7.3H16L12.5 15H0.3Z" fill="#ebe6e8"/></svg>
<svg class="r" style="left:105px;top:14px;" width="16" height="16" viewBox="0 0 16 16"><path d="M0 0H16V16H1.5L0 14.5Z" fill="#d7dbda"/><rect x="3.6" y="0" width="8.6" height="6.6" fill="#fff"/><rect x="3.8" y="11.6" width="9" height="4.4" fill="#fff"/><rect x="5.2" y="12.8" width="1.4" height="2.4" fill="#333"/></svg>
<svg class="r" style="left:129px;top:14px;overflow:visible;" width="16" height="16" viewBox="0 0 16 16"><path d="M0 0H16V16H1.5L0 14.5Z" fill="#d7dbda"/><rect x="3.6" y="0" width="8.6" height="6.6" fill="#fff"/><rect x="3.8" y="11.6" width="9" height="4.4" fill="#fff"/><rect x="5.2" y="12.8" width="1.4" height="2.4" fill="#333"/><path d="M7.5 13L13 6.5L16 9L10.5 15.5L7 16Z" fill="#f3c873"/><path d="M13 6.5L14.3 5L17 7.5L16 9Z" fill="#b66a45"/></svg>
<svg class="r" style="left:153px;top:14px;" width="18" height="16" viewBox="0 0 18 16"><rect x="0.5" y="0.5" width="10" height="15" rx="1" fill="#d4d4d4"/><rect x="1.6" y="1.6" width="7.8" height="11.6" fill="#5e5a5c"/><rect x="4" y="14" width="2.6" height="0.9" fill="#555"/><path d="M7 9.5H11L12 10.5H14.5V12H9L7.6 15.5Z" fill="#f3c873"/><path d="M9.2 12H16L14.4 15.8H7.5Z" fill="#f6cf7e"/></svg>
<svg class="r" style="left:177px;top:13.5px;" width="16" height="17" viewBox="0 0 16 17"><rect x="4.3" y="0.5" width="10" height="16" rx="1" fill="#d4d4d4"/><rect x="5.5" y="1.8" width="7.6" height="12" fill="#5e5a5c"/><rect x="8" y="14.6" width="2.6" height="0.9" fill="#444"/><path d="M2 6.3H7V4L11.5 7.3L7 10.6V8.3H2Z" fill="#5db4f0"/></svg>
<svg class="r" style="left:201px;top:14px;" width="16" height="16" viewBox="0 0 16 16"><rect x="3" y="0" width="10" height="5.2" fill="#fff"/><path d="M0 3.6H2.6V5.6H13.4V3.6H16V12.6H0Z" fill="#ececec"/><rect x="0" y="7.2" width="16" height="1" fill="#cfcfcf"/><rect x="3" y="10" width="10" height="6" fill="#fff"/><rect x="4" y="10.6" width="8" height="4.2" fill="#6bb8ee"/></svg>
<svg class="r" style="left:225px;top:14px;" width="17" height="16" viewBox="0 0 17 16"><path d="M0 7.5L8 2.5V6C12.5 6 16 8 16.3 12C14 9.7 11.5 9.2 8 9.3V12.5Z" fill="#efebec"/></svg>
<svg class="r" style="left:247.9px;top:20px;" width="5.4" height="3" viewBox="0 0 5.4 3"><path d="M0 0H5.4L2.7 3Z" fill="#fff"/></svg>
<svg class="r" style="left:260px;top:14px;" width="17" height="16" viewBox="0 0 17 16"><path d="M16.4 7.5L8.4 2.5V6C3.9 6 0.4 8 0.1 12C2.4 9.7 4.9 9.2 8.4 9.3V12.5Z" fill="#9d9d9d"/></svg>
<svg class="r" style="left:283.90000000000003px;top:20px;" width="5.4" height="3" viewBox="0 0 5.4 3"><path d="M0 0H5.4L2.7 3Z" fill="#b4b4b4"/></svg>
<div class="r" style="left:297px;top:17.5px;width:8.4px;height:1.3px;background:#fff;"></div>
<svg class="r" style="left:297px;top:21px;" width="8.4" height="4.4" viewBox="0 0 8.4 4.4"><path d="M0 0H8.4L4.2 4.4Z" fill="#fff"/></svg>
<svg class="r" style="left:1495px;top:15px;" width="16" height="16" viewBox="0 0 16 16"><path d="M2.2 1.2H6V4.5H7V3H9V4.5H10V1.2H13.8L15.4 8V15H9.6V8.5H6.4V15H0.6V8Z" fill="#f2f2f2" stroke="#3a3a3a" stroke-width=".7"/><rect x="1.5" y="9.5" width="4" height="4.6" fill="#e0e0e0"/><rect x="10.5" y="9.5" width="4" height="4.6" fill="#e0e0e0"/></svg>
<svg class="r" style="left:1519px;top:14px;" width="17" height="17" viewBox="0 0 17 17"><path d="M8.5 0.8C11 0.8 12 3 11.8 5.2C11.6 7.6 10.8 8.6 10.5 9.6C10.5 11.5 16 12.5 16.4 15.6H0.6C1 12.5 6.5 11.5 6.5 9.6C6.2 8.6 5.4 7.6 5.2 5.2C5 3 6 0.8 8.5 0.8Z" fill="#f4f4f4" stroke="#333" stroke-width=".6"/></svg>
<svg class="r" style="left:1641px;top:14px;" width="17" height="16" viewBox="0 0 17 16"><path d="M0.5 1.5H3.2L5.2 10.5H14.2L16 4H4" fill="none" stroke="#f0f0f0" stroke-width="1.5"/><path d="M4.5 4.2H15.8L14.3 9.8H5.6Z" fill="#e8e8e8"/><circle cx="6.3" cy="13.6" r="1.5" fill="#f0f0f0"/><circle cx="13" cy="13.6" r="1.5" fill="#f0f0f0"/></svg>
<svg class="r" style="left:1664px;top:14px;" width="18" height="16" viewBox="0 0 18 16"><path d="M9 2.5L2.5 13H15.5Z" fill="none" stroke="#f0f0f0" stroke-width="1.7" stroke-linejoin="round"/><circle cx="9" cy="2.6" r="2" fill="#f0f0f0" stroke="#2b4a9a" stroke-width=".6"/><circle cx="2.6" cy="13" r="2" fill="#f0f0f0" stroke="#444" stroke-width=".5"/><circle cx="15.4" cy="13" r="2" fill="#f0f0f0" stroke="#444" stroke-width=".5"/></svg>
<svg class="r" style="left:1710px;top:13px;" width="18" height="18" viewBox="0 0 18 18"><circle cx="9" cy="9" r="7.8" fill="#f1f1f1" stroke="#2e2e2e" stroke-width="1"/><text x="9" y="13.4" font-family="Liberation Sans,sans-serif" font-weight="700" font-size="12.5" text-anchor="middle" fill="#2f3fa8">?</text></svg>
<svg class="r" style="left:0px;top:0px;pointer-events:none;" width="1918" height="160" viewBox="0 0 1918 160"><path d="M17.8 90.2L42.3 65.7" stroke="#e4e4e4" stroke-width="1.2"/><rect x="13.8" y="91" width="3.3" height="3.3" fill="#6cc0f5"/><rect x="42.9" y="62" width="3.3" height="3.3" fill="#6cc0f5"/><path d="M61 85.6H76.5M80.6 70.6A7.5 7.5 0 0 1 80.6 85.6" stroke="#e4e4e4" stroke-width="1.3" fill="none"/><rect x="56.8" y="84" width="3.3" height="3.3" fill="#6cc0f5"/><rect x="76.8" y="84" width="3.3" height="3.3" fill="#6cc0f5"/><rect x="76.8" y="69" width="3.3" height="3.3" fill="#6cc0f5"/><circle cx="122.4" cy="77.5" r="15.1" stroke="#d8d6d6" stroke-width="1.3" fill="none"/><rect x="120.8" y="76" width="3.3" height="3.3" fill="#6cc0f5"/><path d="M125.2 74.6L130.5 69.3" stroke="#6cc0f5" stroke-width="1.1" stroke-dasharray="1.6 .7"/><path d="M132 67.6L131.3 72L127.6 68.3Z" fill="#6cc0f5"/><path d="M156.4 89A30 30 0 0 1 181.3 64.4" stroke="#e4e4e4" stroke-width="1.3" fill="none"/><rect x="154.8" y="90" width="3.3" height="3.3" fill="#6cc0f5"/><rect x="163" y="71" width="3.3" height="3.3" fill="#6cc0f5"/><rect x="182" y="63" width="3.3" height="3.3" fill="#6cc0f5"/><rect x="195.3" y="66.4" width="13.6" height="9.8" stroke="#e4e4e4" stroke-width="1.2" fill="none"/><rect x="194" y="65" width="2.3" height="2.3" fill="#6cc0f5"/><rect x="207.8" y="75" width="2.3" height="2.3" fill="#6cc0f5"/><ellipse cx="200.9" cy="95" rx="7" ry="5" stroke="#e4e4e4" stroke-width="1.2" fill="none" stroke-dasharray="22 1.6 1.6 1.6 1.6 1.6 1.6 1.6 8"/><rect x="199.9" y="88.8" width="2.2" height="2.2" fill="#6cc0f5"/><rect x="199.9" y="93.9" width="2.2" height="2.2" fill="#6cc0f5"/><rect x="206.9" y="93.9" width="2.2" height="2.2" fill="#6cc0f5"/><rect x="197.5" y="115.7" width="8.8" height="8" fill="#4a6f8f"/><path d="M197.5 119.5L201.5 115.7M197.5 123L205 115.7M199.5 123.7L206.3 117.3M203 123.7L206.3 120.6" stroke="#6cc0f5" stroke-width="1"/><path d="M196.3 111V127M207.5 111V127M194 114.5H210M194 124.8H210" stroke="#e4e4e4" stroke-width="1.2"/><path d="M247.5 64.5V76.5M241.5 70.5H253.5" stroke="#fff" stroke-width="1.3"/><path d="M247.5 62.6L250.6 66.6H244.4ZM247.5 78.4L250.6 74.4H244.4ZM239.6 70.5L243.6 67.4V73.6ZM255.4 70.5L251.4 67.4V73.6Z" fill="#fff"/><circle cx="243.6" cy="90.5" r="3.2" stroke="#d0d0d0" stroke-width="1.2" fill="none"/><path d="M248.3 88.6H252.6V93" stroke="#eee" stroke-width="1.2" fill="none"/><path d="M250.6 91.8H254.6L252.6 94.8Z" fill="#eee"/><circle cx="247.4" cy="99.6" r="3.2" stroke="#6cc0f5" stroke-width="1.2" fill="none"/><path d="M251.6 96.7A3.2 3.2 0 1 1 251.6 102.5" stroke="#6cc0f5" stroke-width="1.2" fill="none"/><path d="M246.6 121V111.6H240.4V126.5H246.6V124.5" stroke="#dcdcdc" stroke-width="1.2" fill="none"/><path d="M244 122.6H249" stroke="#fff" stroke-width="1.2"/><path d="M248.6 120.4L251.6 122.6L248.6 124.8Z" fill="#fff"/><path d="M248.3 111.6H250.9L255.6 126.5H248.3" stroke="#6cc0f5" stroke-width="1.1" fill="none"/><path d="M321.5 65.4A6.8 6.8 0 1 0 326.6 70.8" stroke="#eee" stroke-width="1.25" fill="none"/><path d="M320.6 62.6L324.4 65.3L320.4 67.7Z" fill="#fff"/><path d="M318.4 89.5V101.4H312.8Z" stroke="#d6d6d6" stroke-width="1.1" fill="none"/><path d="M320.7 89.5V101.4H326.3Z" stroke="#6cc0f5" stroke-width="1.1" fill="none"/><path d="M312.6 117V111.6H327.4V126.4H322.5" stroke="#6cc0f5" stroke-width="1.2" fill="none"/><rect x="312.6" y="118.6" width="8" height="7.8" stroke="#dcdcdc" stroke-width="1.2" fill="none"/><path d="M381 64.5H389" stroke="#6cc0f5" stroke-width="1.1" stroke-dasharray="2 1"/><path d="M393 64.5H397" stroke="#eee" stroke-width="1.1"/><path d="M385 63.8L392.6 73.4L391.2 74.4L386.6 68.6Z M391.2 62.8L392.3 63.3L390.8 74H389.2Z" fill="#f4f4f4"/><circle cx="389.8" cy="76.2" r="1.7" stroke="#f4f4f4" stroke-width="1.1" fill="none"/><circle cx="394.3" cy="75" r="1.7" stroke="#f4f4f4" stroke-width="1.1" fill="none"/><path d="M381.5 96A8.5 8.5 0 0 1 390 87.5" stroke="#6cc0f5" stroke-width="1.2" fill="none"/><path d="M391.3 87.5H397M381.5 97.5V103" stroke="#e8e8e8" stroke-width="1.2"/><rect x="382.4" y="112.8" width="5.3" height="5.3" stroke="#d8d8d8" stroke-width="1.1" fill="none"/><rect x="390.6" y="112.8" width="5.3" height="5.3" stroke="#6cc0f5" stroke-width="1.1" fill="none"/><rect x="382.4" y="120.8" width="5.3" height="5.3" stroke="#6cc0f5" stroke-width="1.1" fill="none"/><rect x="390.6" y="120.8" width="5.3" height="5.3" stroke="#6cc0f5" stroke-width="1.1" fill="none"/><path d="M472.3 62.8V69.2L465.2 76.2L461.4 72.2Z" fill="#f7ce7d"/><path d="M461.4 72.2L465.2 76.2L463.8 77.4L460.2 73.6Z" fill="#fff"/><path d="M460.2 73.4L463.8 77.2C462.5 78.6 460.4 78.6 459.4 77.4C458.6 76.2 459 74.6 460.2 73.4Z" fill="#b56a48"/><path d="M456 78.6H459" stroke="#ddd" stroke-width="1"/><path d="M464 78.6H472.3" stroke="#6cc0f5" stroke-width="1.1"/><path d="M456.6 101.8V94.2L460.6 88.6H472V97L467.6 101.8M460.6 88.6L458.4 92.2M472 88.6L467.5 93.5M469.6 91V99.4" stroke="#6cc0f5" stroke-width="1.05" fill="none"/><rect x="458.6" y="94" width="8" height="7.8" stroke="#dedede" stroke-width="1.2" fill="none"/><path d="M472.3 113.6H462.5C454.5 113.6 454.5 125 462.5 125H472.3" stroke="#6cc0f5" stroke-width="1.2" fill="none"/><path d="M472.3 117H463C459.5 117 459.5 121.6 463 121.6H472.3" stroke="#dedede" stroke-width="1.2" fill="none"/><text x="493.6" y="92.2" font-family="Liberation Sans,sans-serif" font-size="40.2" fill="#dfdfdf" textLength="26.6" lengthAdjust="spacingAndGlyphs">A</text><path d="M543.5 62V94M574.5 62V94M546 68.6H572" stroke="#dcdcdc" stroke-width="1.1"/><path d="M544.4 68.6L548.4 66.3V70.9ZM573.6 68.6L569.6 66.3V70.9Z" fill="#dcdcdc"/><g fill="#f8c66d"><path d="M558.4 77.6H559.8L560.6 83.8H557.4Z"/><path d="M550 81L555 85.2L553.4 86.2L551 83.4Z"/><path d="M567.8 80.8L563 85L564.4 86L567 83.4Z"/><path d="M547.2 89.6L553 88V90.8Z"/><path d="M571 89.4L565 88V90.8Z"/></g><path d="M596.5 64V78M611.5 64V78" stroke="#dcdcdc" stroke-width="1.1"/><path d="M598.5 68.7H609.5" stroke="#6cc0f5" stroke-width="1.1"/><path d="M597.2 68.7L599.4 67.2V70.2ZM610.8 68.7L608.6 67.2V70.2Z" fill="#6cc0f5"/><circle cx="608.3" cy="91.5" r="3" stroke="#dcdcdc" stroke-width="1.1" fill="none"/><path d="M605.3 91.5H602.2L598 99.5" stroke="#dcdcdc" stroke-width="1.1" fill="none"/><path d="M596.2 101.8L596.6 97.4L600 99.4Z" fill="#dcdcdc"/><path d="M596.5 112.5H611.5V125.5H596.5ZM596.5 115.8H611.5M596.5 119H611.5M596.5 122.2H611.5M601.5 115.8V125.5M606.5 115.8V125.5" stroke="#dcdcdc" stroke-width="1.1" fill="none"/></svg>
<svg class="r" style="left:0px;top:0px;pointer-events:none;" width="1918" height="160" viewBox="0 0 1918 160"><path d="M697 62H714.5L704.5 74H687Z" fill="#d9dbda"/><path d="M687 80.5H703.6L714.2 68.2" stroke="#d9dbda" stroke-width="0" fill="none"/><path d="M687 80.3L692 75.6H704.5L714.3 67.8V69.6L704 80.3Z" fill="#d9dbda"/><path d="M687 86.2L692 81.6H704.5V86.2Z" fill="#d9dbda"/><rect x="705.8" y="75.8" width="13.4" height="18.4" fill="#f3f3f3"/><rect x="707.4" y="77.8" width="10" height="7" fill="#6cc0f5" stroke="#555" stroke-width=".8"/><path d="M709 88H716M714.6 86.6L716.2 88L714.6 89.4M716 91.4H709M710.4 90L708.8 91.4L710.4 92.8" stroke="#444" stroke-width=".9" fill="none"/><circle cx="746" cy="68.6" r="5" fill="#f8cd7c"/><rect x="743.75" y="72.35" width="4.5" height="3.5" fill="#f8cd7c"/><path d="M743.9 76.1H748.1V78.6Q746 81.1 743.9 78.6Z" fill="#fff"/><circle cx="764.6" cy="70.4" r="4.4" fill="#f8cd7c"/><path d="M770.10 70.40L772.30 70.40" stroke="#f8cd7c" stroke-width="1.1"/><path d="M768.49 74.29L770.04 75.84" stroke="#f8cd7c" stroke-width="1.1"/><path d="M764.60 75.90L764.60 78.10" stroke="#f8cd7c" stroke-width="1.1"/><path d="M760.71 74.29L759.16 75.84" stroke="#f8cd7c" stroke-width="1.1"/><path d="M759.10 70.40L756.90 70.40" stroke="#f8cd7c" stroke-width="1.1"/><path d="M760.71 66.51L759.16 64.96" stroke="#f8cd7c" stroke-width="1.1"/><path d="M764.60 64.90L764.60 62.70" stroke="#f8cd7c" stroke-width="1.1"/><path d="M768.49 66.51L770.04 64.96" stroke="#f8cd7c" stroke-width="1.1"/><rect x="778.5" y="65.5" width="9" height="9" fill="#7a7a7a"/><path d="M776.5 66.5V63.5H779.5M787.5 63.5H790.5V66.5M776.5 73.5V76.5H779.5" stroke="#cfcfcf" stroke-width="1.1" fill="none"/><circle cx="787.4" cy="74.6" r="2.3" fill="#f8cd7c"/><circle cx="791.70" cy="74.60" r=".8" fill="#f8cd7c"/><circle cx="790.44" cy="77.64" r=".8" fill="#f8cd7c"/><circle cx="787.40" cy="78.90" r=".8" fill="#f8cd7c"/><circle cx="784.36" cy="77.64" r=".8" fill="#f8cd7c"/><circle cx="783.10" cy="74.60" r=".8" fill="#f8cd7c"/><circle cx="784.36" cy="71.56" r=".8" fill="#f8cd7c"/><circle cx="787.40" cy="70.30" r=".8" fill="#f8cd7c"/><circle cx="790.44" cy="71.56" r=".8" fill="#f8cd7c"/><rect x="796" y="70" width="10.6" height="8.4" fill="#f8cd7c"/><rect x="800.4" y="72.4" width="1.3" height="3" fill="#444"/><path d="M802.8 70V66.8A3 3 0 0 1 808.8 66.8V68.6" stroke="#f8cd7c" stroke-width="1.6" fill="none"/><path d="M743.5 88.0H751L745.5 94.0H738Z" fill="#d9dbda"/><circle cx="750.6" cy="96.4" r="3.4" fill="#6cc0f5"/><path d="M748 95L751 92.5M748.2 98L753.2 94M750.4 99.6L753.8 96.8" stroke="#4aa36e" stroke-width=".6"/><rect x="749.2" y="99.4" width="2.8" height="1.6" fill="#6cc0f5"/><path d="M749.2 101H752V102.4Q750.6 103.4 749.2 102.4Z" fill="#fff"/><path d="M767 87.5H775L770 93.0H762Z" fill="#d9dbda"/><path d="M762 95.5H770L774.5 90.7" stroke="#d9dbda" stroke-width="1.3" fill="none"/><path d="M762 98.3H770L774.5 93.5" stroke="#6cc0f5" stroke-width="1.3" fill="none"/><path d="M778 96.5L772.6 101.8" stroke="#eee" stroke-width="1.1"/><path d="M770.8 103.6L771.4 99.6L774.8 103Z" fill="#eee"/><path d="M791.5 88.0H799L793.5 94.0H786Z" fill="#d9dbda"/><g stroke="#6cc0f5" stroke-width="1.1"><path d="M797.5 94.5V102.6M794 96.5L801 100.5M801 96.5L794 100.5"/></g><circle cx="797.5" cy="98.5" r="2.4" stroke="#6cc0f5" stroke-width=".9" fill="none"/><path d="M815.5 88.0H823L817.5 94.0H810Z" fill="#d9dbda"/><rect x="818.4" y="97.1" width="8" height="6" fill="#6cc0f5"/><rect x="821.8" y="99.0" width="1.2" height="2.2" fill="#444"/><path d="M820.1999999999999 97.1V95.19999999999999A2.2 2.2 0 0 1 824.6 95.19999999999999V97.1" stroke="#6cc0f5" stroke-width="1.4" fill="none"/><circle cx="842" cy="90.2" r="3.1" fill="#d0d0d0"/><path d="M834.6 97L839.6 92.6H850L845 97Z" fill="#6cc0f5"/><path d="M834.6 99.8H845L850 95.4M834.6 102.6H845L850 98.2" stroke="#d9dbda" stroke-width="1.3" fill="none"/><path d="M743 111.5H751L746 117.0H738Z" fill="#d9dbda"/><path d="M738 119.5H746L750.5 114.7" stroke="#d9dbda" stroke-width="1.3" fill="none"/><path d="M738 122.3H746L750.5 117.5" stroke="#d9dbda" stroke-width="1.3" fill="none"/><circle cx="750.6" cy="119.6" r="3.5" fill="#f8cd7c"/><rect x="749.025" y="122.225" width="3.15" height="2.4499999999999997" fill="#f8cd7c"/><path d="M749.13 124.85H752.07V126.6Q750.6 128.35 749.13 126.6Z" fill="#fff"/><path d="M767 111.5H775L770 117.0H762Z" fill="#d9dbda"/><path d="M762 119.5H770L774.5 114.7" stroke="#d9dbda" stroke-width="1.3" fill="none"/><path d="M762 122.3H770L774.5 117.5" stroke="#6cc0f5" stroke-width="1.3" fill="none"/><path d="M771.4 126.6L776.6 121.4" stroke="#eee" stroke-width="1.1"/><path d="M778.4 119.6L777.8 123.6L774.4 120.2Z" fill="#eee"/><path d="M791 111.5H799L794 117.0H786Z" fill="#d9dbda"/><path d="M786 119.5H794L798.5 114.7" stroke="#d9dbda" stroke-width="1.3" fill="none"/><path d="M786 122.3H794L798.5 117.5" stroke="#d9dbda" stroke-width="1.3" fill="none"/><circle cx="797.6" cy="122.2" r="2.6" fill="#f8cd7c"/><circle cx="802.20" cy="122.20" r=".8" fill="#f8cd7c"/><circle cx="800.85" cy="125.45" r=".8" fill="#f8cd7c"/><circle cx="797.60" cy="126.80" r=".8" fill="#f8cd7c"/><circle cx="794.35" cy="125.45" r=".8" fill="#f8cd7c"/><circle cx="793.00" cy="122.20" r=".8" fill="#f8cd7c"/><circle cx="794.35" cy="118.95" r=".8" fill="#f8cd7c"/><circle cx="797.60" cy="117.60" r=".8" fill="#f8cd7c"/><circle cx="800.85" cy="118.95" r=".8" fill="#f8cd7c"/><path d="M815.5 112.0H823L817.5 118.0H810Z" fill="#d9dbda"/><rect x="816.6" y="121.1" width="8" height="6" fill="#f8cd7c"/><rect x="820.0" y="123.0" width="1.2" height="2.2" fill="#444"/><path d="M821.8000000000001 121.1V119.39999999999999A2.3 2.3 0 0 1 826.4 119.39999999999999V120.8" stroke="#f8cd7c" stroke-width="1.4" fill="none"/><path d="M839 111.5H847L842 117.0H834Z" fill="#d9dbda"/><path d="M834 119.5H842L846.5 114.7" stroke="#d9dbda" stroke-width="1.3" fill="none"/><path d="M834 122.3H842L846.5 117.5" stroke="#d9dbda" stroke-width="1.3" fill="none"/><path d="M839.6 120.8L843 118L848.6 124.4L845.6 127.2Z" fill="#f8cd7c"/><path d="M843 118L845.4 116L851 122.4L848.6 124.4Z" fill="#f2f2f2"/><path d="M847.6 118.6L849.6 116.4L851.2 117.8L849.2 120.2Z" fill="#f2f2f2"/><path d="M964.8 60H977L982 65V84H964.8Z" fill="#74c0f5"/><path d="M977 60V65H982Z" fill="#eaf4fb"/><rect x="951.4" y="70.4" width="20.4" height="14" fill="#858585" stroke="#dcdcdc" stroke-width="1.2"/><circle cx="971.5" cy="84.5" r="7.2" fill="#858585" stroke="#dcdcdc" stroke-width="1.1" fill-opacity=".92"/><path d="M964.5 84.4H971.8V77.4" stroke="#dcdcdc" stroke-width="1.2" fill="none"/><rect x="950" y="83" width="3" height="3" fill="#dcdcdc"/><rect x="991.6" y="68.4" width="9" height="7.6" fill="#808080" stroke="#d8d8d8" stroke-width="1"/><circle cx="1000.6" cy="75.2" r="3" fill="#808080" stroke="#d8d8d8" stroke-width="1"/><rect x="990" y="75" width="2.2" height="2.2" fill="#e0e0e0"/><path d="M1001.60 63.60L1002.33 65.64L1004.29 64.71L1003.36 66.67L1005.40 67.40L1003.36 68.13L1004.29 70.09L1002.33 69.16L1001.60 71.20L1000.87 69.16L998.91 70.09L999.84 68.13L997.80 67.40L999.84 66.67L998.91 64.71L1000.87 65.64Z" fill="#f8cd7c"/><rect x="991.6" y="92.4" width="8.4" height="7.6" fill="#808080" stroke="#d8d8d8" stroke-width="1"/><circle cx="1002" cy="99.4" r="3.2" fill="#808080" stroke="#d8d8d8" stroke-width="1"/><rect x="990" y="99" width="2.2" height="2.2" fill="#e0e0e0"/><path d="M996.80 96.60L999.62 96.00L997.33 93.77Z" fill="#eee"/><path d="M999.62 96.00L1005.01 90.49L1002.72 88.26L997.33 93.77Z" fill="#f8cd7c"/><path d="M1005.01 90.49L1006.54 88.92L1004.26 86.68L1002.72 88.26Z" fill="#b56a48"/><path d="M990.4 112.4H996.4L1003.6 119.6L997.6 126L990.4 118.6Z" fill="#e9e9e9"/><circle cx="993" cy="115" r="1" fill="#555"/><path d="M997.6 126L1004.6 119" stroke="#e9e9e9" stroke-width="1.6"/><path d="M997.00 120.60L999.81 119.97L997.50 117.76Z" fill="#eee"/><path d="M999.81 119.97L1005.04 114.50L1002.72 112.29L997.50 117.76Z" fill="#f8cd7c"/><path d="M1005.04 114.50L1006.56 112.90L1004.24 110.70L1002.72 112.29Z" fill="#b56a48"/><rect x="1123" y="62" width="20.2" height="28" fill="#dcdedd"/><rect x="1125.4" y="64.4" width="13.2" height="10.2" fill="#74c0f5" stroke="#4a4a4a" stroke-width="1"/><path d="M1126 80.2H1128M1131.4 80.2H1138M1126 85.4H1132M1135.6 85.4H1138" stroke="#555" stroke-width=".9"/><rect x="1129" y="78" width="1.6" height="4.4" fill="#444"/><rect x="1133" y="83.2" width="1.6" height="4.4" fill="#444"/><path d="M1136.6 85.2L1141.6 81.2L1150.4 90.6L1145.6 94.4Z" fill="#f8cd7c"/><path d="M1141.6 81.2L1146 78L1153.6 86.4L1150.4 90.6Z" fill="#f1eeee"/><path d="M1148.4 80.4L1151 77.8L1153.2 79.8L1150.8 82.8Z" fill="#f1eeee"/><circle cx="1178" cy="70" r="8" fill="#c98f55"/><path d="M1178 70L1170 70A8 8 0 0 1 1174.6 62.8Z" fill="#67c87f"/><path d="M1178 70L1174.6 62.8A8 8 0 0 1 1183.4 64.1Z" fill="#f0c473"/><path d="M1178 70L1186 70A8 8 0 0 1 1182.4 76.7Z" fill="#b8703f"/><path d="M1178 70L1182.4 76.7A8 8 0 0 1 1175.2 77.5Z" fill="#9a3fc8"/><path d="M1178 70L1175.2 77.5A8 8 0 0 1 1170 70Z" fill="#4a7fd0"/><rect x="1170" y="86" width="16" height="1" fill="#e2e2e2"/><rect x="1170" y="89" width="16" height="2" fill="#e2e2e2"/><rect x="1170" y="93" width="16" height="3" fill="#e2e2e2"/><rect x="1170" y="98" width="16" height="4" fill="#e2e2e2"/><g stroke="#e0e0e0" stroke-width="1.1"><path d="M1170 111.5H1185" stroke-dasharray="1 1"/><path d="M1170 114.5H1185" stroke-dasharray="3 1"/><path d="M1170 117.5H1185"/><path d="M1170 120.5H1185" stroke-dasharray="3.5 1 1.5 1"/><path d="M1170 123.5H1185" stroke-dasharray="4 1.2"/></g></svg>
<svg class="r" style="left:0px;top:0px;pointer-events:none;" width="1918" height="160" viewBox="0 0 1918 160"><path d="M1381.6 66.4H1377V92.6H1381.6" stroke="#fff" stroke-width="1.9" fill="none"/><path d="M1392.6 92.6H1396.8V79.6" stroke="#fff" stroke-width="1.9" fill="none"/><path d="M1381.4 71.4Q1381.4 69.4 1383.4 69.4H1387.4L1388.4 71.8H1390.4Q1392 71.8 1392 73.8V77.6H1381.4Z" fill="#5fb2ee"/><rect x="1384" y="72.6" width="4.6" height="2.6" fill="#7d7d7d"/><circle cx="1386.6" cy="84.4" r="4.6" fill="#8a8a8a" stroke="#dcdcdc" stroke-width="1.5" stroke-dasharray="1.4 .7"/><path d="M1398.60 62.40L1399.98 66.87L1404.12 64.68L1401.93 68.82L1406.40 70.20L1401.93 71.58L1404.12 75.72L1399.98 73.53L1398.60 78.00L1397.22 73.53L1393.08 75.72L1395.27 71.58L1390.80 70.20L1395.27 68.82L1393.08 64.68L1397.22 66.87Z" fill="#f8cd7c"/><rect x="1419.6" y="65.6" width="5" height="4.4" fill="#7a7a7a" stroke="#6cc0f5" stroke-width="1.2"/><circle cx="1422" cy="74.2" r="2.5" fill="#8a8a8a" stroke="#dcdcdc" stroke-width="1.1"/><path d="M1427 63.6H1429.6V78.4H1427" stroke="#fff" stroke-width="1.2" fill="none"/><path d="M1426.6 68.4L1432.8 74.6M1432.8 68.4L1426.6 74.6" stroke="#b8673e" stroke-width="1.7"/><path d="M1420 87.6H1417.6V100.6H1420M1425.4 87.6H1427.6V94" stroke="#fff" stroke-width="1.2" fill="none"/><rect x="1420.4" y="89.4" width="4.4" height="3.4" fill="#7a7a7a" stroke="#6cc0f5" stroke-width="1.1"/><circle cx="1422.6" cy="96.6" r="2.3" fill="#8a8a8a" stroke="#dcdcdc" stroke-width="1.1"/><path d="M1424.20 102.20L1427.05 101.74L1424.87 99.40Z" fill="#eee"/><path d="M1427.05 101.74L1431.87 97.27L1429.70 94.92L1424.87 99.40Z" fill="#f8cd7c"/><path d="M1431.87 97.27L1433.49 95.77L1431.31 93.43L1429.70 94.92Z" fill="#b56a48"/><rect x="1414.5" y="109.5" width="22" height="20" fill="#5b8bc4"/><rect x="1414.5" y="124.5" width="22" height="5" fill="#4a62b8" opacity=".75"/><rect x="1414.5" y="109.5" width="22" height="3" fill="#79a6d8" opacity=".7"/><path d="M1420 111.6H1417.6V124.4H1420M1425.2 111.6H1427.4V115" stroke="#fff" stroke-width="1.2" fill="none"/><rect x="1420.4" y="113.4" width="4.4" height="3.2" fill="#6a8a8a" stroke="#5fd27a" stroke-width="1.1"/><circle cx="1422.6" cy="120.6" r="2.3" fill="#6a8a9a" stroke="#5fd27a" stroke-width="1.1"/><path d="M1426.40 115.40L1426.40 125.85L1428.87 123.57L1430.77 127.56L1432.48 126.80L1430.68 122.91L1434.00 122.91Z" fill="#fff" stroke="#5a5a5a" stroke-width=".4"/><path d="M1462.5 70V78.6M1489.5 70V78.6M1465 74.3H1487" stroke="#dcdcdc" stroke-width="1.1"/><path d="M1463.4 74.3L1467 72.2V76.4ZM1488.6 74.3L1485 72.2V76.4Z" fill="#cfcfcf"/><rect x="1462" y="80" width="28" height="6" fill="#f8cd7c"/><rect x="1464.3" y="80" width="1" height="2.4" fill="#595959"/><rect x="1467.1" y="80" width="1" height="1.6" fill="#595959"/><rect x="1469.9" y="80" width="1" height="2.4" fill="#595959"/><rect x="1472.7" y="80" width="1" height="1.6" fill="#595959"/><rect x="1475.5" y="80" width="1" height="2.4" fill="#595959"/><rect x="1478.3" y="80" width="1" height="1.6" fill="#595959"/><rect x="1481.1" y="80" width="1" height="2.4" fill="#595959"/><rect x="1483.9" y="80" width="1" height="1.6" fill="#595959"/><rect x="1486.7" y="80" width="1" height="2.4" fill="#595959"/><path d="M1513.80 66.60L1513.80 76.72L1516.19 74.51L1518.03 78.38L1519.69 77.64L1517.94 73.87L1521.16 73.87Z" fill="#fff" stroke="#5a5a5a" stroke-width=".4"/><rect x="1521" y="70" width="9" height="9" fill="#f0f0f0"/><path d="M1522.6 72.4H1523.6M1524.8 72.4H1528.6M1522.6 74.6H1523.6M1524.8 74.6H1528.6M1522.6 76.8H1523.6M1524.8 76.8H1528.6" stroke="#3d6bc0" stroke-width="1"/><path d="M1521.6 63L1524.4 65.4L1523 66.4L1524.8 68.4L1520.4 70.4L1521 67.6L1518.6 66.6Z" fill="#f8cd7c"/><rect x="1514.6" y="87.6" width="14" height="14" rx="1.5" fill="none" stroke="#5fd27a" stroke-width="1.2" stroke-dasharray="2.2 1.2"/><path d="M1516.6 92H1519.4V98H1521.6V100H1516.6ZM1519.4 89.6H1526.6V96H1524.4V91.8H1519.4Z" fill="#46c676"/><path d="M1522.40 91.60L1522.40 101.72L1524.79 99.51L1526.63 103.38L1528.29 102.64L1526.54 98.87L1529.76 98.87Z" fill="#fff" stroke="#5a5a5a" stroke-width=".4"/><rect x="1516" y="111" width="12" height="16" fill="#d6d8d7"/><rect x="1517.8" y="113" width="8.4" height="2.6" fill="#6a6a6a"/><rect x="1517.8" y="117.2" width="2" height="1.9" fill="#555"/><rect x="1521.0" y="117.2" width="2" height="1.9" fill="#555"/><rect x="1524.2" y="117.2" width="2" height="1.9" fill="#555"/><rect x="1517.8" y="120.3" width="2" height="1.9" fill="#555"/><rect x="1521.0" y="120.3" width="2" height="1.9" fill="#555"/><rect x="1524.2" y="120.3" width="2" height="1.9" fill="#555"/><rect x="1517.8" y="123.4" width="2" height="1.9" fill="#555"/><rect x="1521.0" y="123.4" width="2" height="1.9" fill="#555"/><rect x="1524.2" y="123.4" width="2" height="1.9" fill="#555"/><rect x="1551" y="65" width="22" height="25" fill="#e3b277"/><path d="M1557 66.2H1560.4Q1560.8 62.4 1562 62.4Q1563.2 62.4 1563.6 66.2H1567V64.6H1557Z" fill="#f4f4f4"/><rect x="1557" y="64.4" width="10" height="2" fill="#f4f4f4"/><rect x="1560.6" y="62.2" width="2.8" height="2.6" fill="#f4f4f4"/><rect x="1557.6" y="70.4" width="16" height="20" fill="#595959"/><path d="M1559 72H1571.6L1577 77.4V94H1559Z" fill="#dcdedd"/><path d="M1571.6 72V77.4H1577Z" fill="#f6f6f6"/><rect x="1594" y="63" width="12" height="14" fill="#cdd1cf"/><path d="M1596 66.4H1604M1596 69.2H1601M1596 72H1600M1596 74.8H1600" stroke="#5a5a5a" stroke-width="1"/><path d="M1601 68L1607.4 75.6M1609.6 69.6L1603.4 75.6" stroke="#f4f4f4" stroke-width="1.3"/><circle cx="1603" cy="77" r="1.6" fill="none" stroke="#f4f4f4" stroke-width="1.1"/><circle cx="1608" cy="77" r="1.6" fill="none" stroke="#f4f4f4" stroke-width="1.1"/><path d="M1595 87H1601.4V88.6H1597V99.6H1595Z" fill="#d4d6d5"/><path d="M1598 90H1604.6L1608 93.4V103H1598Z" fill="#d4d6d5"/><path d="M1604.6 90V93.4H1608Z" fill="#f4f4f4"/><rect x="1602" y="88.2" width="1" height="1" fill="#ddd"/><path d="M1632 66H1646V76H1664V90H1632Z" fill="#dcdedd"/></svg>
<svg class="r" style="left:0px;top:990px;pointer-events:none;" width="1918" height="38" viewBox="0 990 1918 38"><path d="M1498.6 1001V1016.5H1514M1498.6 1011.6H1503.6V1016.5" stroke="#f0f0f0" stroke-width="1.3" fill="none"/><circle cx="1528.4" cy="1009.6" r="6.2" stroke="#e2e2e2" stroke-width="1.2" fill="none"/><path d="M1536 1002L1529 1009.3H1538" stroke="#e2e2e2" stroke-width="1.2" fill="none"/><path d="M1562 1002L1575 1015" stroke="#c97a50" stroke-width="1.1"/><path d="M1568.4 1001V1016" stroke="#4fd67c" stroke-width="1.2"/><rect x="1567" y="1007.2" width="2.8" height="2.8" fill="#555" stroke="#f0f0f0" stroke-width=".9"/><path d="M1613 1003L1601.4 1014.6H1617" stroke="#e6e6e6" stroke-width="1.2" fill="none"/><rect x="1606.4" y="1007.2" width="2.8" height="2.8" fill="#c8c8c8"/><rect x="1627.6" y="1003.6" width="13" height="13" stroke="#f0f0f0" stroke-width="1.3" fill="none"/><rect x="1625.2" y="1001.2" width="4.6" height="4.6" fill="#5c8bc4" stroke="#f0f0f0" stroke-width="1.1"/><path d="M1668 1007V1016.5H1670.5M1672 1001.5H1682.5V1004" stroke="#e8e8e8" stroke-width="1.1" fill="none" stroke-dasharray="2.2 1.2"/><path d="M1667.4 1001.2H1671.4L1667.4 1005.2Z" fill="#e8e8e8"/><path d="M1668.4 1002.2L1672.4 1006.2" stroke="#e8e8e8" stroke-width="1.3"/><path d="M1672.5 1009V1006.5H1675M1680 1006.5H1682.5V1009M1672.5 1014V1016.5H1675M1680 1016.5H1682.5V1014" stroke="#e8e8e8" stroke-width="1.1" fill="none"/><rect x="1674.6" y="1008.6" width="6" height="6" stroke="#e8e8e8" stroke-width="1.3" fill="none"/><path d="M1697.6 1001L1699.8 1009.6L1704.6 1017L1697.6 1013.2L1690.6 1017L1695.3999999999999 1009.6Z" fill="#d8d8d8"/><circle cx="1703.8" cy="1005" r="2.5" stroke="#e0e0e0" stroke-width="1.1" fill="none"/><path d="M1721.6 1001L1723.8 1009.6L1728.6 1017L1721.6 1013.2L1714.6 1017L1719.3999999999999 1009.6Z" fill="#d8d8d8"/><path d="M1728.6 1001L1730 1003.6L1728.6 1004.4L1730.6 1006L1726 1009.4L1727.2 1006.2L1725 1005Z" fill="#e0e0e0"/><path d="M1756.95 1006.99L1756.95 1010.01L1754.49 1010.55L1754.48 1010.58L1755.83 1012.70L1753.70 1014.83L1751.58 1013.48L1751.55 1013.49L1751.01 1015.95L1747.99 1015.95L1747.45 1013.49L1747.42 1013.48L1745.30 1014.83L1743.17 1012.70L1744.52 1010.58L1744.51 1010.55L1742.05 1010.01L1742.05 1006.99L1744.51 1006.45L1744.52 1006.42L1743.17 1004.30L1745.30 1002.17L1747.42 1003.52L1747.45 1003.51L1747.99 1001.05L1751.01 1001.05L1751.55 1003.51L1751.58 1003.52L1753.70 1002.17L1755.83 1004.30L1754.48 1006.42L1754.49 1006.45Z M1752.1 1008.5A2.6 2.6 0 1 0 1746.9 1008.5A2.6 2.6 0 1 0 1752.1 1008.5Z" fill="#dedede" fill-rule="evenodd"/><path d="M1782 1009H1798M1790 1001V1017" stroke="#dcdcdc" stroke-width="2"/><rect x="1809.6" y="1001.6" width="6" height="6" stroke="#e4e4e4" stroke-width="1.2" fill="none"/><circle cx="1821.4" cy="1007.6" r="3.1" stroke="#e4e4e4" stroke-width="1.2" fill="none"/><path d="M1815.4 1011.2L1812.2 1016.4H1818.8Z" stroke="#e4e4e4" stroke-width="1.2" fill="none"/><path d="M1836 1002H1843.6L1847 1005.4V1013H1836Z" fill="#5fb0ee"/><path d="M1843.6 1002V1005.4H1847Z" fill="#f4f4f4"/><path d="M1839.4 1002V1011.4M1836 1006.4H1847" stroke="#f4f4f4" stroke-width="1.1"/><circle cx="1839.4" cy="1006.4" r="1.5" fill="#f4f4f4"/><circle cx="1839.4" cy="1006.4" r=".6" fill="#5fb0ee"/><path d="M1842 1008.4V1012M1844.4 1008.4V1012M1836.8 1003.6H1838M1836.8 1008.6H1838M1841 1003.6H1842.6" stroke="#3f7fd0" stroke-width=".8"/><rect x="1836" y="1011.4" width="7" height="3.6" fill="#f8cd7c"/><path d="M1844.6 1012.8L1846.8 1015.4L1850.6 1011.8" stroke="#46c676" stroke-width="1.2" fill="none"/><rect x="1861.6" y="1003.6" width="15" height="11" stroke="#ececec" stroke-width="1.3" fill="none"/><path d="M1871.4 1005.6H1874.6V1008.8M1874.4 1005.8L1871.6 1008.6M1867 1012.6H1863.8V1009.4M1864 1012.4L1866.8 1009.6" stroke="#e4e4e4" stroke-width="1.1" fill="none"/><path d="M1885 1003H1901M1885 1009H1901M1885 1015H1901" stroke="#ececec" stroke-width="2"/></svg>
<svg class="r" style="left:1860px;top:436px;pointer-events:none;" width="58" height="150" viewBox="1860 436 58 150"><rect x="1870.7" y="443.7" width="32" height="132.6" rx="4" fill="#9b9a99" stroke="#757474" stroke-width="1.5" stroke-dasharray="1.6 .5"/><path d="M1871.6 447.7Q1871.6 444.6 1874.7 444.6H1898.7Q1901.8 444.6 1901.8 447.7V453.6H1871.6Z" fill="#a7a5a1"/><path d="M1873 454.3H1901" stroke="#8d8d8d" stroke-width=".8" stroke-dasharray="1 1"/><circle cx="1897" cy="449" r="2.6" fill="#a3a2a0" stroke="#c2c1bf" stroke-width=".9"/><path d="M1895.9 447.9L1898.1 450.1M1898.1 447.9L1895.9 450.1" stroke="#bdbcba" stroke-width=".6"/><circle cx="1896.6" cy="570" r="2.8" fill="#a8a7a5" stroke="#858585" stroke-width=".8"/><path d="M1894 570H1899.2" stroke="#858585" stroke-width=".8"/><path d="M1893 483.6H1884Q1876 483.6 1876 474.6Q1876 466 1884.5 466H1889Q1893 466 1893 470Z" fill="#a5a4a2" stroke="#8a8988" stroke-width="1.3"/><circle cx="1883.6" cy="474.4" r="3.6" fill="#9b9a99" stroke="#888" stroke-width="1.2"/><path d="M1879 478A6.2 6.2 0 0 1 1888 469.6" stroke="#8f8e8d" stroke-width=".8" fill="none" stroke-dasharray="1 1"/><text x="1887" y="485.6" font-family="Liberation Sans,sans-serif" font-size="7.5" font-weight="700" fill="#868584">2D</text><path d="M1873 490.5H1901" stroke="#a3a2a0" stroke-width=".8"/><path d="M1881.6 506.4V498.8Q1881.6 497 1883 497Q1884.4 497 1884.4 498.8V504V497.6Q1884.4 495.8 1885.8 495.8Q1887.2 495.8 1887.2 497.6V504V497.8Q1887.2 496.2 1888.6 496.2Q1890 496.2 1890 497.8V504.4V500.4Q1890 499 1891.2 499Q1892.6 499 1892.6 500.4V504L1894.6 502.6Q1896 501.6 1897 502.6L1893.6 510.6Q1892 516.6 1888.4 516.6H1885Q1881 516.6 1879.4 513L1876.4 507.4Q1875.6 506 1877 505.4Q1878.4 505 1879.6 506.4Z" fill="#a3a2a0" stroke="#878685" stroke-width="1"/><path d="M1877 524L1890 537M1890 524L1877 537" stroke="#868584" stroke-width="1"/><path d="M1876 523H1880L1876 527ZM1891 523H1887L1891 527ZM1876 538.4H1880L1876 534.4Z" fill="#868584"/><circle cx="1890.4" cy="538" r="3.8" fill="#a3a2a0" stroke="#868584" stroke-width="1"/><path d="M1893.2 541L1897.6 545" stroke="#868584" stroke-width="2"/><path d="M1885.4 553H1890L1887.7 555.6Z" fill="#858483"/></svg>
</div>
<div id="winb"></div>
</body></html>
